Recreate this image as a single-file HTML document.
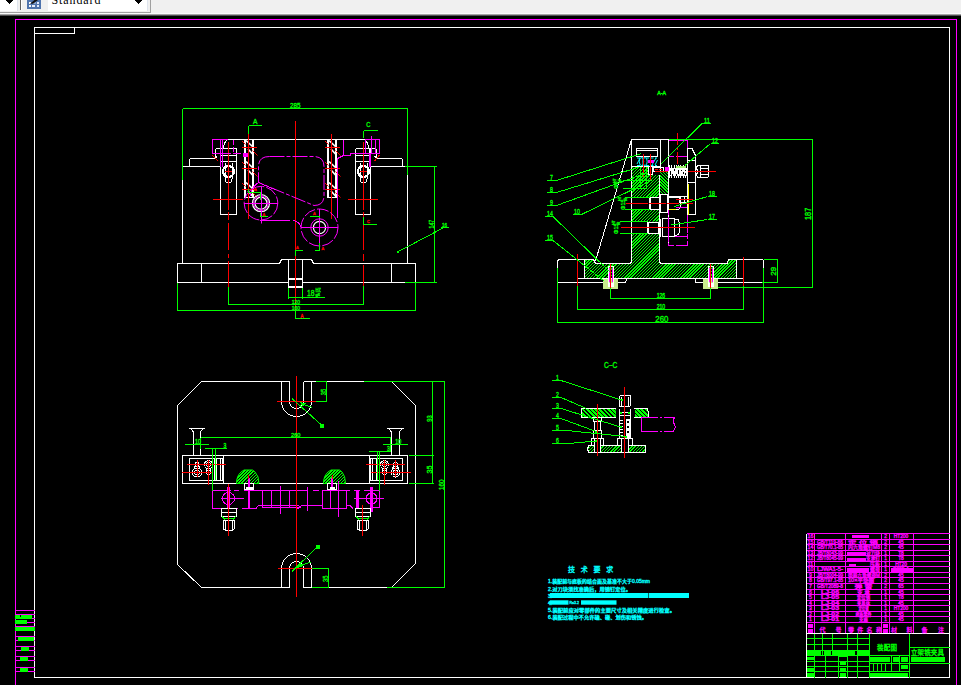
<!DOCTYPE html>
<html><head><meta charset="utf-8"><title>CAD</title>
<style>
html,body{margin:0;padding:0;background:#000;overflow:hidden}
body{width:961px;height:685px;position:relative;font-family:"Liberation Sans","Noto Sans CJK SC",sans-serif}
#tb{position:absolute;left:0;top:0;width:961px;height:16px;background:#f0f0f0;overflow:hidden}
svg{position:absolute;left:0;top:0}
svg text{stroke-width:0.35px;paint-order:stroke}
</style></head><body>
<svg width="961" height="685" viewBox="0 0 961 685" shape-rendering="crispEdges">
<rect x="0" y="0" width="961" height="685" fill="#000000"/>
<rect x="0" y="0" width="961" height="13" fill="#f0f0f0"/>
<rect x="0" y="13" width="961" height="1" fill="#fafafa"/>
<rect x="0" y="14" width="961" height="1" fill="#a4a4a4"/>
<rect x="0" y="15" width="961" height="1" fill="#505050"/>
<rect x="0" y="11.5" width="151" height="1.0" fill="#a0a0a0"/>
<rect x="150" y="0" width="1" height="12.5" fill="#a0a0a0"/>
<rect x="48" y="0" width="98.5" height="10.5" fill="#ffffff"/>
<rect x="146.5" y="0" width="1.0" height="11" fill="#dfe5ee"/>
<rect x="48" y="10.5" width="99.5" height="0.5" fill="#e4e8ee"/>
<rect x="0" y="0" width="16.5" height="10.5" fill="#ffffff"/>
<rect x="16.5" y="0" width="1.0" height="11" fill="#dfe5ee"/>
<rect x="0" y="10.5" width="17.5" height="0.5" fill="#e4e8ee"/>
<rect x="20" y="0" width="1" height="9.5" fill="#606060"/>
<rect x="21" y="0" width="1" height="9.5" fill="#ffffff"/>
<polygon points="5.8,0 13.2,0 9.5,4.1" fill="#000"/>
<polygon points="134.5,0 142.5,0 138.5,4.2" fill="#000"/>
<rect x="27" y="0" width="14" height="8.5" fill="#4f74ad"/>
<rect x="28.5" y="1.5" width="2.5" height="2.3" fill="#f4f7fc"/>
<rect x="32" y="1.5" width="3.5" height="2.3" fill="#8aa5d0"/>
<rect x="36.5" y="1.5" width="2.5" height="2.3" fill="#dfe8fa"/>
<rect x="28.5" y="5" width="2.5" height="1.9000000000000004" fill="#f4f7fc"/>
<rect x="32.2" y="5" width="2.5999999999999943" height="1.9000000000000004" fill="#e8eefa"/>
<rect x="36.5" y="5" width="2.5" height="1.9000000000000004" fill="#dfe8fa"/>
<polygon points="30,3.8 33,3.8 38,0 34.5,0" fill="#111" shape-rendering="auto"/>
<clipPath id="tbc"><rect x="48" y="0" width="99" height="10"/></clipPath>
<g clip-path="url(#tbc)" shape-rendering="auto">
<text x="51.5" y="3.6" fill="#000" font-size="12" font-family='"Liberation Serif", serif' letter-spacing="0.9" style="stroke:none">Standard</text>
</g>
<line x1="15" y1="19.5" x2="957" y2="19.5" stroke="#ff00ff" stroke-width="1"/>
<line x1="15.5" y1="19" x2="15.5" y2="685" stroke="#ff00ff" stroke-width="1"/>
<line x1="956.5" y1="19" x2="956.5" y2="685" stroke="#ff00ff" stroke-width="1"/>
<rect x="34.5" y="27.5" width="915.0" height="650.0" stroke="#ffffff" fill="none" stroke-width="1"/>
<rect x="34.5" y="27.5" width="40.0" height="6.0" stroke="#ffffff" fill="none" stroke-width="1"/>
<line x1="15" y1="610.5" x2="34.5" y2="610.5" stroke="#ff00ff" stroke-width="1"/>
<line x1="15" y1="614.5" x2="34.5" y2="614.5" stroke="#ff00ff" stroke-width="1"/>
<line x1="15" y1="618.5" x2="34.5" y2="618.5" stroke="#ff00ff" stroke-width="1"/>
<line x1="15" y1="622.5" x2="34.5" y2="622.5" stroke="#ff00ff" stroke-width="1"/>
<line x1="15" y1="626.5" x2="34.5" y2="626.5" stroke="#ff00ff" stroke-width="1"/>
<line x1="15" y1="630.5" x2="34.5" y2="630.5" stroke="#ff00ff" stroke-width="1"/>
<line x1="15" y1="636.5" x2="34.5" y2="636.5" stroke="#ff00ff" stroke-width="1"/>
<line x1="15" y1="640.5" x2="34.5" y2="640.5" stroke="#ff00ff" stroke-width="1"/>
<line x1="15" y1="646.5" x2="34.5" y2="646.5" stroke="#ff00ff" stroke-width="1"/>
<line x1="15" y1="650.5" x2="34.5" y2="650.5" stroke="#ff00ff" stroke-width="1"/>
<line x1="15" y1="656.5" x2="34.5" y2="656.5" stroke="#ff00ff" stroke-width="1"/>
<line x1="15" y1="660.5" x2="34.5" y2="660.5" stroke="#ff00ff" stroke-width="1"/>
<line x1="15" y1="667.5" x2="34.5" y2="667.5" stroke="#ff00ff" stroke-width="1"/>
<line x1="15" y1="671.5" x2="34.5" y2="671.5" stroke="#ff00ff" stroke-width="1"/>
<rect x="15" y="615" width="17" height="3.5" fill="#00ff00"/>
<rect x="19.5" y="615" width="1.0" height="2" fill="#000"/>
<rect x="15" y="620" width="12" height="4" fill="#00ff00"/>
<rect x="15" y="627" width="20" height="4" fill="#00ff00"/>
<rect x="18" y="637" width="16" height="4" fill="#00ff00"/>
<rect x="21" y="647" width="8" height="4" fill="#00ff00"/>
<rect x="20" y="657" width="8" height="4" fill="#00ff00"/>
<rect x="20" y="668" width="8" height="4" fill="#00ff00"/>
<g id="v1">
<rect x="177.5" y="263.5" width="238.0" height="19.0" stroke="#ffffff" fill="none" stroke-width="1"/>
<line x1="201.5" y1="263.5" x2="201.5" y2="282.5" stroke="#ffffff" stroke-width="1"/>
<line x1="391.5" y1="263.5" x2="391.5" y2="282.5" stroke="#ffffff" stroke-width="1"/>
<rect x="280" y="263" width="33" height="1" fill="#000"/>
<path d="M279.5,263.5 L281.5,259.5 H311.5 L313.5,263.5" stroke="#ffffff" fill="none" stroke-width="1"/>
<line x1="288.5" y1="259.5" x2="288.5" y2="287.5" stroke="#ffffff" stroke-width="1"/>
<line x1="302.5" y1="259.5" x2="302.5" y2="287.5" stroke="#ffffff" stroke-width="1"/>
<rect x="289" y="282" width="13" height="1" fill="#000"/>
<rect x="288.5" y="278" width="14.0" height="1.5" fill="#ffffff"/>
<rect x="288.5" y="285.8" width="14.0" height="2.0" fill="#ffffff"/>
<line x1="182.5" y1="166.5" x2="182.5" y2="263.5" stroke="#ffffff" stroke-width="1"/>
<line x1="407.5" y1="166.5" x2="407.5" y2="263.5" stroke="#ffffff" stroke-width="1"/>
<line x1="182.5" y1="166.5" x2="220.5" y2="166.5" stroke="#ffffff" stroke-width="1"/>
<line x1="370.5" y1="166.5" x2="407.5" y2="166.5" stroke="#ffffff" stroke-width="1"/>
<path d="M189.5,166.5 V160.5 Q189.5,158.5 191.5,158.5 H213.5 L217.5,156.5" stroke="#ffffff" fill="none" stroke-width="1"/>
<path d="M402.5,166.5 V160.5 Q402.5,158.5 400.5,158.5 H378.5 L374.5,156.5" stroke="#ffffff" fill="none" stroke-width="1"/>
<line x1="228" y1="139.5" x2="364" y2="139.5" stroke="#ffffff" stroke-width="1"/>
<path d="M228,139.5 Q223.5,141 222.5,153" stroke="#ffffff" fill="none" stroke-width="1"/>
<path d="M364,139.5 Q368.5,141 369.5,153" stroke="#ffffff" fill="none" stroke-width="1"/>
<line x1="220.5" y1="148.5" x2="220.5" y2="214.5" stroke="#ffffff" stroke-width="1"/>
<line x1="236.5" y1="148.5" x2="236.5" y2="214.5" stroke="#ffffff" stroke-width="1"/>
<line x1="220.5" y1="214.5" x2="236.5" y2="214.5" stroke="#ffffff" stroke-width="1"/>
<line x1="220.5" y1="155.5" x2="236.5" y2="155.5" stroke="#ffffff" stroke-width="1"/>
<line x1="220.5" y1="161.5" x2="236.5" y2="161.5" stroke="#ffffff" stroke-width="1"/>
<path d="M236.5,148.5 H217.5 Q215.5,148.5 215.5,150.5 V156.5" stroke="#ffffff" fill="none" stroke-width="1"/>
<circle cx="228.5" cy="171.5" r="5.5" stroke="#ffffff" fill="none" stroke-width="2"/>
<path d="M225.0,162.5 V179 Q225.0,183 228.5,183 Q232.0,183 232.0,179 V162.5" stroke="#ffffff" fill="none" stroke-width="1"/>
<line x1="225.0" y1="171.5" x2="232.0" y2="171.5" stroke="#ff0000" stroke-width="1"/>
<line x1="228.5" y1="142" x2="228.5" y2="209.5" stroke="#ff0000" stroke-width="1"/>
<line x1="228.5" y1="211.5" x2="228.5" y2="217" stroke="#ff0000" stroke-width="1"/>
<line x1="212.5" y1="199.5" x2="242.5" y2="199.5" stroke="#ff0000" stroke-width="1"/>
<line x1="355.5" y1="148.5" x2="355.5" y2="214.5" stroke="#ffffff" stroke-width="1"/>
<line x1="370.5" y1="148.5" x2="370.5" y2="214.5" stroke="#ffffff" stroke-width="1"/>
<line x1="355.5" y1="214.5" x2="370.5" y2="214.5" stroke="#ffffff" stroke-width="1"/>
<line x1="355.5" y1="155.5" x2="370.5" y2="155.5" stroke="#ffffff" stroke-width="1"/>
<line x1="355.5" y1="161.5" x2="370.5" y2="161.5" stroke="#ffffff" stroke-width="1"/>
<path d="M355.5,148.5 H374.5 Q376.5,148.5 376.5,150.5 V156.5" stroke="#ffffff" fill="none" stroke-width="1"/>
<circle cx="363.5" cy="171.5" r="5.5" stroke="#ffffff" fill="none" stroke-width="2"/>
<path d="M360.0,162.5 V179 Q360.0,183 363.5,183 Q367.0,183 367.0,179 V162.5" stroke="#ffffff" fill="none" stroke-width="1"/>
<line x1="360.0" y1="171.5" x2="367.0" y2="171.5" stroke="#ff0000" stroke-width="1"/>
<line x1="363.5" y1="142" x2="363.5" y2="209.5" stroke="#ff0000" stroke-width="1"/>
<line x1="363.5" y1="211.5" x2="363.5" y2="217" stroke="#ff0000" stroke-width="1"/>
<line x1="347.5" y1="199.5" x2="377.5" y2="199.5" stroke="#ff0000" stroke-width="1"/>
<line x1="228.5" y1="217" x2="228.5" y2="219.5" stroke="#ff0000" stroke-width="1"/>
<line x1="228.5" y1="223" x2="228.5" y2="250" stroke="#ff0000" stroke-width="1"/>
<line x1="228.5" y1="253.5" x2="228.5" y2="258" stroke="#ff0000" stroke-width="1"/>
<line x1="228.5" y1="260.5" x2="228.5" y2="287" stroke="#ff0000" stroke-width="1"/>
<line x1="363.5" y1="224" x2="363.5" y2="249.5" stroke="#ff0000" stroke-width="1"/>
<line x1="363.5" y1="253.5" x2="363.5" y2="260.5" stroke="#ff0000" stroke-width="1"/>
<line x1="363.5" y1="265" x2="363.5" y2="285.5" stroke="#ff0000" stroke-width="1"/>
<line x1="212" y1="155" x2="218.5" y2="161.5" stroke="#ff0000" stroke-width="1"/>
<line x1="379.5" y1="155" x2="374.5" y2="161" stroke="#ff0000" stroke-width="1"/>
<rect x="244.5" y="139.5" width="9.0" height="58.0" stroke="#ffffff" fill="none" stroke-width="1"/>
<line x1="245.5" y1="139.5" x2="245.5" y2="197.5" stroke="#ffffff" stroke-width="1"/>
<line x1="252.0" y1="139.5" x2="252.0" y2="197.5" stroke="#ffffff" stroke-width="1"/>
<line x1="242.0" y1="147.5" x2="257.0" y2="147.5" stroke="#ff0000" stroke-width="1"/>
<g shape-rendering="auto">
<line x1="242.0" y1="141.0" x2="245.5" y2="144.5" stroke="#ff0000" stroke-width="1"/>
<line x1="252.5" y1="150.5" x2="257.5" y2="155.5" stroke="#ff0000" stroke-width="1"/>
<line x1="246.0" y1="140.5" x2="252.5" y2="146.5" stroke="#ffffff" stroke-width="1.7"/>
<line x1="248.0" y1="149.0" x2="252.5" y2="154.0" stroke="#ffffff" stroke-width="1.7"/>
</g>
<line x1="242.0" y1="168.5" x2="257.0" y2="168.5" stroke="#ff0000" stroke-width="1"/>
<g shape-rendering="auto">
<line x1="242.0" y1="162.0" x2="245.5" y2="165.5" stroke="#ff0000" stroke-width="1"/>
<line x1="252.5" y1="171.5" x2="257.5" y2="176.5" stroke="#ff0000" stroke-width="1"/>
<line x1="246.0" y1="161.5" x2="252.5" y2="167.5" stroke="#ffffff" stroke-width="1.7"/>
<line x1="248.0" y1="170.0" x2="252.5" y2="175.0" stroke="#ffffff" stroke-width="1.7"/>
</g>
<line x1="242.0" y1="189.5" x2="257.0" y2="189.5" stroke="#ff0000" stroke-width="1"/>
<g shape-rendering="auto">
<line x1="242.0" y1="183.0" x2="245.5" y2="186.5" stroke="#ff0000" stroke-width="1"/>
<line x1="252.5" y1="192.5" x2="257.5" y2="197.5" stroke="#ff0000" stroke-width="1"/>
<line x1="246.0" y1="182.5" x2="252.5" y2="188.5" stroke="#ffffff" stroke-width="1.7"/>
<line x1="248.0" y1="191.0" x2="252.5" y2="196.0" stroke="#ffffff" stroke-width="1.7"/>
</g>
<rect x="327.5" y="139.5" width="9.0" height="58.0" stroke="#ffffff" fill="none" stroke-width="1"/>
<line x1="328.5" y1="139.5" x2="328.5" y2="197.5" stroke="#ffffff" stroke-width="1"/>
<line x1="335.0" y1="139.5" x2="335.0" y2="197.5" stroke="#ffffff" stroke-width="1"/>
<line x1="325.0" y1="147.5" x2="340.0" y2="147.5" stroke="#ff0000" stroke-width="1"/>
<g shape-rendering="auto">
<line x1="325.0" y1="141.0" x2="328.5" y2="144.5" stroke="#ff0000" stroke-width="1"/>
<line x1="335.5" y1="150.5" x2="340.5" y2="155.5" stroke="#ff0000" stroke-width="1"/>
<line x1="329.0" y1="140.5" x2="335.5" y2="146.5" stroke="#ffffff" stroke-width="1.7"/>
<line x1="331.0" y1="149.0" x2="335.5" y2="154.0" stroke="#ffffff" stroke-width="1.7"/>
</g>
<line x1="325.0" y1="168.5" x2="340.0" y2="168.5" stroke="#ff0000" stroke-width="1"/>
<g shape-rendering="auto">
<line x1="325.0" y1="162.0" x2="328.5" y2="165.5" stroke="#ff0000" stroke-width="1"/>
<line x1="335.5" y1="171.5" x2="340.5" y2="176.5" stroke="#ff0000" stroke-width="1"/>
<line x1="329.0" y1="161.5" x2="335.5" y2="167.5" stroke="#ffffff" stroke-width="1.7"/>
<line x1="331.0" y1="170.0" x2="335.5" y2="175.0" stroke="#ffffff" stroke-width="1.7"/>
</g>
<line x1="325.0" y1="189.5" x2="340.0" y2="189.5" stroke="#ff0000" stroke-width="1"/>
<g shape-rendering="auto">
<line x1="325.0" y1="183.0" x2="328.5" y2="186.5" stroke="#ff0000" stroke-width="1"/>
<line x1="335.5" y1="192.5" x2="340.5" y2="197.5" stroke="#ff0000" stroke-width="1"/>
<line x1="329.0" y1="182.5" x2="335.5" y2="188.5" stroke="#ffffff" stroke-width="1.7"/>
<line x1="331.0" y1="191.0" x2="335.5" y2="196.0" stroke="#ffffff" stroke-width="1.7"/>
</g>
<line x1="248.5" y1="134" x2="248.5" y2="219" stroke="#ff0000" stroke-width="1"/>
<line x1="331.5" y1="134" x2="331.5" y2="219" stroke="#ff0000" stroke-width="1"/>
<line x1="295.5" y1="121" x2="295.5" y2="310" stroke="#ff0000" stroke-width="1"/>
<path d="M269.5,156.5 H313.5 Q324,156.5 324,166.5 V195.5 Q324,205.5 314,205.5 L258.5,182.5 V166.5 Q258.5,156.5 269.5,156.5 Z" stroke="#ff00ff" fill="none" stroke-dasharray="15 2 4 2" shape-rendering="auto"/>
<rect x="212.5" y="139.5" width="10.0" height="14.0" stroke="#ff00ff" fill="none" stroke-width="1"/>
<line x1="212.5" y1="139.5" x2="228" y2="139.5" stroke="#ff00ff" stroke-width="1"/>
<line x1="222.5" y1="153.5" x2="243" y2="153.5" stroke="#ff00ff" stroke-width="1" stroke-dasharray="8 2"/>
<rect x="243" y="153" width="5" height="4" fill="#ff00ff"/>
<line x1="220.5" y1="139.5" x2="220.5" y2="166.5" stroke="#ff00ff" stroke-width="1"/>
<line x1="222.5" y1="139.5" x2="222.5" y2="166.5" stroke="#ff00ff" stroke-width="1"/>
<line x1="233.5" y1="140" x2="233.5" y2="153.5" stroke="#ff00ff" stroke-width="1" stroke-dasharray="5 2"/>
<rect x="365.5" y="139.5" width="14.0" height="14.0" stroke="#ff00ff" fill="none" stroke-width="1"/>
<line x1="371.5" y1="136" x2="371.5" y2="153.5" stroke="#ff00ff" stroke-width="1"/>
<line x1="375.5" y1="139.5" x2="375.5" y2="153.5" stroke="#ff00ff" stroke-width="1"/>
<line x1="369.5" y1="153" x2="369.5" y2="167" stroke="#ff00ff" stroke-width="2"/>
<line x1="343.5" y1="140" x2="343.5" y2="156" stroke="#ff00ff" stroke-width="1"/>
<path d="M379.5,153.5 H351 L350.5,155.5 H343.5 L337.5,158.5 V218" stroke="#ff00ff" fill="none" stroke-width="1"/>
<g shape-rendering="auto">
<circle cx="261" cy="203.2" r="8.5" stroke="#ffffff" fill="none" stroke-width="1.2"/>
<circle cx="261" cy="203.2" r="6" stroke="#ffffff" fill="none" stroke-width="1.2"/>
<circle cx="261" cy="203.2" r="7.3" stroke="#ff00ff" fill="none" stroke-width="1"/>
<circle cx="261" cy="203.2" r="16.8" stroke="#ff00ff" fill="none" stroke-width="1" stroke-dasharray="12 2"/>
<line x1="244" y1="203.5" x2="278" y2="203.5" stroke="#ff00ff" stroke-width="1"/>
<line x1="261.5" y1="186.5" x2="261.5" y2="223.5" stroke="#ff00ff" stroke-width="1"/>
<circle cx="319.5" cy="227.5" r="6.1" stroke="#ffffff" fill="none" stroke-width="1.2"/>
<circle cx="319.5" cy="227.5" r="8.7" stroke="#ff00ff" fill="none" stroke-width="1"/>
<circle cx="319.5" cy="227.5" r="18.5" stroke="#ff00ff" fill="none" stroke-width="1" stroke-dasharray="12 2"/>
</g>
<line x1="300.5" y1="227.5" x2="338" y2="227.5" stroke="#ff00ff" stroke-width="1"/>
<line x1="319.5" y1="209" x2="319.5" y2="243.5" stroke="#ff00ff" stroke-width="1"/>
<path d="M258.5,182.5 Q252,186 249.5,197.5" stroke="#ff00ff" fill="none" stroke-width="1"/>
<path d="M260,220.5 H293 Q299,221 301,227" stroke="#ff00ff" fill="none" stroke-width="1" stroke-dasharray="30 3"/>
<line x1="258.5" y1="182.5" x2="276" y2="190" stroke="#ff00ff" stroke-width="1"/>
<line x1="248.5" y1="125.5" x2="248.5" y2="134" stroke="#00ff00" stroke-width="1"/>
<line x1="248.5" y1="125.5" x2="262" y2="125.5" stroke="#00ff00" stroke-width="1"/>
<line x1="363.5" y1="130.5" x2="363.5" y2="138" stroke="#00ff00" stroke-width="1"/>
<line x1="363.5" y1="130.5" x2="377.5" y2="130.5" stroke="#00ff00" stroke-width="1"/>
<path d="M248.5,189 V192.5 H260.5 V199.5" stroke="#00ff00" fill="none" stroke-width="1"/>
<path d="M260.5,213 V216.5 H268" stroke="#00ff00" fill="none" stroke-width="1"/>
<path d="M310,216.5 H319.5 V218" stroke="#00ff00" fill="none" stroke-width="1"/>
<path d="M319.5,243 V250.5 H315" stroke="#00ff00" fill="none" stroke-width="1"/>
<path d="M295.5,255.5 V250.5 H303" stroke="#00ff00" fill="none" stroke-width="1"/>
<path d="M295.5,310 V318.5 H310" stroke="#00ff00" fill="none" stroke-width="1"/>
<path d="M363.5,217 V224.5 H376.5" stroke="#00ff00" fill="none" stroke-width="1"/>
<line x1="182.5" y1="108.5" x2="407.5" y2="108.5" stroke="#00ff00" stroke-width="1"/>
<line x1="182.5" y1="108.5" x2="182.5" y2="180" stroke="#00ff00" stroke-width="1"/>
<line x1="407.5" y1="108.5" x2="407.5" y2="175" stroke="#00ff00" stroke-width="1"/>
<line x1="405" y1="166.5" x2="437" y2="166.5" stroke="#00ff00" stroke-width="1"/>
<line x1="405" y1="282.5" x2="437" y2="282.5" stroke="#00ff00" stroke-width="1"/>
<line x1="434.5" y1="166.5" x2="434.5" y2="282.5" stroke="#00ff00" stroke-width="1"/>
<line x1="288.5" y1="287.5" x2="288.5" y2="298.5" stroke="#00ff00" stroke-width="1"/>
<line x1="302.5" y1="287.5" x2="302.5" y2="298.5" stroke="#00ff00" stroke-width="1"/>
<line x1="288.5" y1="297.5" x2="325" y2="297.5" stroke="#00ff00" stroke-width="1"/>
<line x1="228.5" y1="287" x2="228.5" y2="304.5" stroke="#00ff00" stroke-width="1"/>
<line x1="363.5" y1="286" x2="363.5" y2="304.5" stroke="#00ff00" stroke-width="1"/>
<line x1="228.5" y1="304.5" x2="363.5" y2="304.5" stroke="#00ff00" stroke-width="1"/>
<line x1="177.5" y1="282.5" x2="177.5" y2="310.5" stroke="#00ff00" stroke-width="1"/>
<line x1="415.5" y1="282.5" x2="415.5" y2="310.5" stroke="#00ff00" stroke-width="1"/>
<line x1="177.5" y1="310.5" x2="415.5" y2="310.5" stroke="#00ff00" stroke-width="1"/>
<line x1="397.5" y1="252" x2="445" y2="227" stroke="#00ff00" stroke-width="1"/>
<line x1="441" y1="227.5" x2="449" y2="227.5" stroke="#00ff00" stroke-width="1"/>
<rect x="396.5" y="251" width="2.0" height="2" fill="#00ff00"/>
<g shape-rendering="auto">
<text x="290" y="107.8" fill="#00ff00" stroke="#00ff00" font-size="7" text-anchor="start" font-family='"Liberation Sans", "Noto Sans CJK SC", sans-serif' textLength="10.5" lengthAdjust="spacingAndGlyphs">285</text>
<text x="253" y="124.2" fill="#00ff00" stroke="#00ff00" font-size="7" text-anchor="start" font-family='"Liberation Sans", "Noto Sans CJK SC", sans-serif' textLength="4.4" lengthAdjust="spacingAndGlyphs">A</text>
<text x="366.3" y="127.2" fill="#00ff00" stroke="#00ff00" font-size="7" text-anchor="start" font-family='"Liberation Sans", "Noto Sans CJK SC", sans-serif' textLength="4.2" lengthAdjust="spacingAndGlyphs">C</text>
<text x="307" y="296" fill="#00ff00" stroke="#00ff00" font-size="9" text-anchor="start" font-family='"Liberation Sans", "Noto Sans CJK SC", sans-serif' textLength="7.5" lengthAdjust="spacingAndGlyphs">18</text>
<text x="315.5" y="291" fill="#00ff00" stroke="#00ff00" font-size="4.2" text-anchor="start" font-family='"Liberation Sans", "Noto Sans CJK SC", sans-serif'>H7</text>
<text x="315.5" y="296" fill="#00ff00" stroke="#00ff00" font-size="4.2" text-anchor="start" font-family='"Liberation Sans", "Noto Sans CJK SC", sans-serif'>g6</text>
<line x1="315.5" y1="291.8" x2="321" y2="291.8" stroke="#00ff00" stroke-width="1"/>
<text x="291.8" y="304.2" fill="#00ff00" stroke="#00ff00" font-size="6" text-anchor="start" font-family='"Liberation Sans", "Noto Sans CJK SC", sans-serif' textLength="8.2" lengthAdjust="spacingAndGlyphs">120</text>
<text x="291.8" y="310.2" fill="#00ff00" stroke="#00ff00" font-size="6" text-anchor="start" font-family='"Liberation Sans", "Noto Sans CJK SC", sans-serif' textLength="8.2" lengthAdjust="spacingAndGlyphs">160</text>
<text x="434" y="228.5" fill="#00ff00" stroke="#00ff00" font-size="7" text-anchor="start" font-family='"Liberation Sans", "Noto Sans CJK SC", sans-serif' transform="rotate(-90 434 228.5)" textLength="8.8" lengthAdjust="spacingAndGlyphs">147</text>
<text x="442" y="227" fill="#00ff00" stroke="#00ff00" font-size="5.5" text-anchor="start" font-family='"Liberation Sans", "Noto Sans CJK SC", sans-serif' textLength="5" lengthAdjust="spacingAndGlyphs">16</text>
<text x="296" y="249" fill="#ff0000" stroke="#ff0000" font-size="4" text-anchor="start" font-family='"Liberation Sans", "Noto Sans CJK SC", sans-serif'>A</text>
<text x="321.5" y="250" fill="#ff0000" stroke="#ff0000" font-size="4" text-anchor="start" font-family='"Liberation Sans", "Noto Sans CJK SC", sans-serif'>A</text>
<text x="313" y="215" fill="#ff0000" stroke="#ff0000" font-size="4" text-anchor="start" font-family='"Liberation Sans", "Noto Sans CJK SC", sans-serif'>A</text>
<text x="262.5" y="215.5" fill="#ff0000" stroke="#ff0000" font-size="4" text-anchor="start" font-family='"Liberation Sans", "Noto Sans CJK SC", sans-serif'>A</text>
<text x="254" y="191" fill="#ff0000" stroke="#ff0000" font-size="4" text-anchor="start" font-family='"Liberation Sans", "Noto Sans CJK SC", sans-serif'>A</text>
<text x="367" y="223" fill="#ff0000" stroke="#ff0000" font-size="4" text-anchor="start" font-family='"Liberation Sans", "Noto Sans CJK SC", sans-serif'>C</text>
<text x="300.5" y="317.5" fill="#ff0000" stroke="#ff0000" font-size="4.5" text-anchor="start" font-family='"Liberation Sans", "Noto Sans CJK SC", sans-serif'>A</text>
</g>
</g>
<defs>
<pattern id="hg" width="2.2" height="2.2" patternUnits="userSpaceOnUse" patternTransform="rotate(45)"><line x1="0" y1="0" x2="0" y2="2.2" stroke="#00ff00" stroke-width="0.9"/></pattern>
<pattern id="hg2" width="2.2" height="2.2" patternUnits="userSpaceOnUse" patternTransform="rotate(-45)"><line x1="0" y1="0" x2="0" y2="2.2" stroke="#00ff00" stroke-width="0.9"/></pattern>
<pattern id="hc" width="2" height="2" patternUnits="userSpaceOnUse" patternTransform="rotate(45)"><line x1="0" y1="0" x2="0" y2="2" stroke="#00ffff" stroke-width="1"/></pattern>
<pattern id="hgd" width="2.2" height="2.2" patternUnits="userSpaceOnUse" patternTransform="rotate(45)"><line x1="0" y1="0" x2="0" y2="2.2" stroke="#00ff00" stroke-width="0.9"/></pattern>
</defs>
<g id="v2">
<clipPath id="hf1"><path d="M631.5,166.5 H660 V197 H650 V209.5 H660 V221.5 H650 V233.5 H660 V263.5 H736 V259.5 H728.5 L727,263.5 H736 V278.5 H584.5 V259.5 H593 L595,263.5 H631.5 Z"/></clipPath>
<g clip-path="url(#hf1)" stroke="#00ff00" stroke-width="1" shape-rendering="crispEdges">
<line x1="471.00" y1="279" x2="584.00" y2="166"/>
<line x1="474.11" y1="279" x2="587.11" y2="166"/>
<line x1="477.22" y1="279" x2="590.22" y2="166"/>
<line x1="480.33" y1="279" x2="593.33" y2="166"/>
<line x1="483.44" y1="279" x2="596.44" y2="166"/>
<line x1="486.55" y1="279" x2="599.55" y2="166"/>
<line x1="489.66" y1="279" x2="602.66" y2="166"/>
<line x1="492.77" y1="279" x2="605.77" y2="166"/>
<line x1="495.88" y1="279" x2="608.88" y2="166"/>
<line x1="498.99" y1="279" x2="611.99" y2="166"/>
<line x1="502.10" y1="279" x2="615.10" y2="166"/>
<line x1="505.21" y1="279" x2="618.21" y2="166"/>
<line x1="508.32" y1="279" x2="621.32" y2="166"/>
<line x1="511.43" y1="279" x2="624.43" y2="166"/>
<line x1="514.54" y1="279" x2="627.54" y2="166"/>
<line x1="517.65" y1="279" x2="630.65" y2="166"/>
<line x1="520.76" y1="279" x2="633.76" y2="166"/>
<line x1="523.87" y1="279" x2="636.87" y2="166"/>
<line x1="526.98" y1="279" x2="639.98" y2="166"/>
<line x1="530.09" y1="279" x2="643.09" y2="166"/>
<line x1="533.20" y1="279" x2="646.20" y2="166"/>
<line x1="536.31" y1="279" x2="649.31" y2="166"/>
<line x1="539.42" y1="279" x2="652.42" y2="166"/>
<line x1="542.53" y1="279" x2="655.53" y2="166"/>
<line x1="545.64" y1="279" x2="658.64" y2="166"/>
<line x1="548.75" y1="279" x2="661.75" y2="166"/>
<line x1="551.86" y1="279" x2="664.86" y2="166"/>
<line x1="554.97" y1="279" x2="667.97" y2="166"/>
<line x1="558.08" y1="279" x2="671.08" y2="166"/>
<line x1="561.19" y1="279" x2="674.19" y2="166"/>
<line x1="564.30" y1="279" x2="677.30" y2="166"/>
<line x1="567.41" y1="279" x2="680.41" y2="166"/>
<line x1="570.52" y1="279" x2="683.52" y2="166"/>
<line x1="573.63" y1="279" x2="686.63" y2="166"/>
<line x1="576.74" y1="279" x2="689.74" y2="166"/>
<line x1="579.85" y1="279" x2="692.85" y2="166"/>
<line x1="582.96" y1="279" x2="695.96" y2="166"/>
<line x1="586.07" y1="279" x2="699.07" y2="166"/>
<line x1="589.18" y1="279" x2="702.18" y2="166"/>
<line x1="592.29" y1="279" x2="705.29" y2="166"/>
<line x1="595.40" y1="279" x2="708.40" y2="166"/>
<line x1="598.51" y1="279" x2="711.51" y2="166"/>
<line x1="601.62" y1="279" x2="714.62" y2="166"/>
<line x1="604.73" y1="279" x2="717.73" y2="166"/>
<line x1="607.84" y1="279" x2="720.84" y2="166"/>
<line x1="610.95" y1="279" x2="723.95" y2="166"/>
<line x1="614.06" y1="279" x2="727.06" y2="166"/>
<line x1="617.17" y1="279" x2="730.17" y2="166"/>
<line x1="620.28" y1="279" x2="733.28" y2="166"/>
<line x1="623.39" y1="279" x2="736.39" y2="166"/>
<line x1="626.50" y1="279" x2="739.50" y2="166"/>
<line x1="629.61" y1="279" x2="742.61" y2="166"/>
<line x1="632.72" y1="279" x2="745.72" y2="166"/>
<line x1="635.83" y1="279" x2="748.83" y2="166"/>
<line x1="638.94" y1="279" x2="751.94" y2="166"/>
<line x1="642.05" y1="279" x2="755.05" y2="166"/>
<line x1="645.16" y1="279" x2="758.16" y2="166"/>
<line x1="648.27" y1="279" x2="761.27" y2="166"/>
<line x1="651.38" y1="279" x2="764.38" y2="166"/>
<line x1="654.49" y1="279" x2="767.49" y2="166"/>
<line x1="657.60" y1="279" x2="770.60" y2="166"/>
<line x1="660.71" y1="279" x2="773.71" y2="166"/>
<line x1="663.82" y1="279" x2="776.82" y2="166"/>
<line x1="666.93" y1="279" x2="779.93" y2="166"/>
<line x1="670.04" y1="279" x2="783.04" y2="166"/>
<line x1="673.15" y1="279" x2="786.15" y2="166"/>
<line x1="676.26" y1="279" x2="789.26" y2="166"/>
<line x1="679.37" y1="279" x2="792.37" y2="166"/>
<line x1="682.48" y1="279" x2="795.48" y2="166"/>
<line x1="685.59" y1="279" x2="798.59" y2="166"/>
<line x1="688.70" y1="279" x2="801.70" y2="166"/>
<line x1="691.81" y1="279" x2="804.81" y2="166"/>
<line x1="694.92" y1="279" x2="807.92" y2="166"/>
<line x1="698.03" y1="279" x2="811.03" y2="166"/>
<line x1="701.14" y1="279" x2="814.14" y2="166"/>
<line x1="704.25" y1="279" x2="817.25" y2="166"/>
<line x1="707.36" y1="279" x2="820.36" y2="166"/>
<line x1="710.47" y1="279" x2="823.47" y2="166"/>
<line x1="713.58" y1="279" x2="826.58" y2="166"/>
<line x1="716.69" y1="279" x2="829.69" y2="166"/>
<line x1="719.80" y1="279" x2="832.80" y2="166"/>
<line x1="722.91" y1="279" x2="835.91" y2="166"/>
<line x1="726.02" y1="279" x2="839.02" y2="166"/>
<line x1="729.13" y1="279" x2="842.13" y2="166"/>
<line x1="732.24" y1="279" x2="845.24" y2="166"/>
<line x1="735.35" y1="279" x2="848.35" y2="166"/>
</g>
<clipPath id="hf2"><path d="M660,172 H668.5 V194 H660 Z"/></clipPath>
<g clip-path="url(#hf2)" stroke="#00ff00" stroke-width="1" shape-rendering="crispEdges">
<line x1="638.00" y1="172" x2="660.00" y2="194"/>
<line x1="641.11" y1="172" x2="663.11" y2="194"/>
<line x1="644.22" y1="172" x2="666.22" y2="194"/>
<line x1="647.33" y1="172" x2="669.33" y2="194"/>
<line x1="650.44" y1="172" x2="672.44" y2="194"/>
<line x1="653.55" y1="172" x2="675.55" y2="194"/>
<line x1="656.66" y1="172" x2="678.66" y2="194"/>
<line x1="659.77" y1="172" x2="681.77" y2="194"/>
<line x1="662.88" y1="172" x2="684.88" y2="194"/>
<line x1="665.99" y1="172" x2="687.99" y2="194"/>
</g>
<path d="M557.5,282.5 V262 Q557.5,259.5 560,259.5 H593.5 L595.5,263.5 H628.5 Q631.5,263.5 631.5,260.5" stroke="#ffffff" fill="none" stroke-width="1"/>
<path d="M659.5,260.5 Q659.5,263.5 662.5,263.5 H727 L728.5,259.5 H761 Q763.5,259.5 763.5,262 V282.5" stroke="#ffffff" fill="none" stroke-width="1"/>
<line x1="557.5" y1="282.5" x2="625.5" y2="282.5" stroke="#ffffff" stroke-width="1"/>
<line x1="625.5" y1="282.5" x2="627" y2="278.5" stroke="#ffffff" stroke-width="1"/>
<line x1="695.5" y1="282.5" x2="763.5" y2="282.5" stroke="#ffffff" stroke-width="1"/>
<line x1="695.5" y1="278.5" x2="695.5" y2="282.5" stroke="#ffffff" stroke-width="1"/>
<line x1="577.5" y1="278.5" x2="743.5" y2="278.5" stroke="#ffffff" stroke-width="1"/>
<line x1="584.5" y1="259.5" x2="584.5" y2="278.5" stroke="#ffffff" stroke-width="1"/>
<line x1="736.5" y1="259.5" x2="736.5" y2="278.5" stroke="#ffffff" stroke-width="1"/>
<line x1="631.5" y1="139.5" x2="631.5" y2="261" stroke="#ffffff" stroke-width="1"/>
<line x1="659.5" y1="166.5" x2="659.5" y2="261" stroke="#ffffff" stroke-width="1"/>
<line x1="631.5" y1="139.5" x2="595.5" y2="261" stroke="#ffffff" stroke-width="1"/>
<line x1="631.5" y1="139.5" x2="668.5" y2="139.5" stroke="#ffffff" stroke-width="1"/>
<line x1="660.5" y1="139.5" x2="660.5" y2="172" stroke="#ffffff" stroke-width="1"/>
<line x1="668.5" y1="139.5" x2="668.5" y2="245" stroke="#ffffff" stroke-width="1"/>
<rect x="636.5" y="148.5" width="21.0" height="8.0" stroke="#ffffff" fill="none" stroke-width="1"/>
<line x1="636.5" y1="150.5" x2="657.5" y2="150.5" stroke="#ffffff" stroke-width="1"/>
<g shape-rendering="auto">
<path d="M637,158 H657 M637,165.5 H657" stroke="#00ffff" fill="none" stroke-width="1" stroke-dasharray="3 1.5"/>
<ellipse cx="641.5" cy="161.5" rx="2.2" ry="4" stroke="#00ffff" fill="none"/>
<ellipse cx="645" cy="161.5" rx="2.2" ry="4" stroke="#00ffff" fill="none"/>
<path d="M637,164 L640,158 M652,165 L656,158 M655,165 L657.5,160" stroke="#00ffff" fill="none" stroke-width="1"/>
</g>
<rect x="648" y="159.5" width="5.5" height="3.0" fill="#ff00ff"/>
<line x1="631.5" y1="166.5" x2="660" y2="166.5" stroke="#ffffff" stroke-width="1"/>
<rect x="632" y="197.5" width="27.5" height="12.0" fill="#000"/>
<rect x="632" y="222" width="27.5" height="11.5" fill="#000"/>
<rect x="649.5" y="197.5" width="10.0" height="12.0" stroke="#ffffff" fill="none" stroke-width="1"/>
<line x1="650.5" y1="197.5" x2="650.5" y2="209.5" stroke="#ffffff" stroke-width="1"/>
<rect x="647.5" y="222.5" width="12.0" height="11.0" stroke="#ffffff" fill="none" stroke-width="1"/>
<line x1="648.5" y1="222.5" x2="648.5" y2="233.5" stroke="#ffffff" stroke-width="1"/>
<line x1="658.5" y1="222.5" x2="658.5" y2="233.5" stroke="#ffffff" stroke-width="1"/>
<rect x="660.5" y="194.5" width="7.0" height="18.0" stroke="#ffffff" fill="none" stroke-width="1"/>
<path d="M668.5,197.5 H680 V208 L678.5,209.5 H668.5 Z" stroke="#ffffff" fill="none" stroke-width="1"/>
<line x1="669" y1="209.5" x2="676" y2="209.5" stroke="#ffff00" stroke-width="1"/>
<rect x="679.5" y="196.5" width="8.0" height="6.0" stroke="#ffffff" fill="none" stroke-width="1"/>
<line x1="684.5" y1="196.5" x2="684.5" y2="202.5" stroke="#ffffff" stroke-width="1"/>
<rect x="662.5" y="218.5" width="12.0" height="18.0" stroke="#ffffff" fill="none" stroke-width="1"/>
<line x1="660.5" y1="218.5" x2="660.5" y2="236.5" stroke="#ffffff" stroke-width="1"/>
<path d="M674.5,219.5 H677 Q679,219.5 679,221.5 V233 Q679,235 677,235 H674.5" stroke="#ffffff" fill="none" stroke-width="1"/>
<line x1="668.5" y1="140.5" x2="687.5" y2="140.5" stroke="#ff00ff" stroke-width="1"/>
<line x1="687.5" y1="140.5" x2="687.5" y2="148.5" stroke="#ff00ff" stroke-width="1"/>
<line x1="668.5" y1="156.5" x2="674" y2="156.5" stroke="#ff00ff" stroke-width="1"/>
<line x1="675.5" y1="156.5" x2="687.5" y2="156.5" stroke="#ff00ff" stroke-width="1"/>
<line x1="668.5" y1="209.5" x2="668.5" y2="215" stroke="#ff00ff" stroke-width="1"/>
<line x1="668.5" y1="216.5" x2="668.5" y2="241.5" stroke="#ff00ff" stroke-width="1"/>
<line x1="668.5" y1="242.5" x2="668.5" y2="245.5" stroke="#ff00ff" stroke-width="1"/>
<line x1="687.5" y1="214.5" x2="687.5" y2="232.5" stroke="#ff00ff" stroke-width="1"/>
<line x1="687.5" y1="234" x2="687.5" y2="239" stroke="#ff00ff" stroke-width="1"/>
<line x1="687.5" y1="240.5" x2="687.5" y2="245.5" stroke="#ff00ff" stroke-width="1"/>
<line x1="668.5" y1="245.5" x2="674" y2="245.5" stroke="#ff00ff" stroke-width="1"/>
<line x1="675.5" y1="245.5" x2="687.5" y2="245.5" stroke="#ff00ff" stroke-width="1"/>
<line x1="674.5" y1="236.5" x2="687.5" y2="236.5" stroke="#ff00ff" stroke-width="1"/>
<line x1="675.5" y1="207.5" x2="687" y2="207.5" stroke="#ff00ff" stroke-width="1"/>
<path d="M687.5,148.5 H692 L695.5,155.5 V214.5 H687.5 Z" stroke="#ffffff" fill="none" stroke-width="1"/>
<line x1="687.5" y1="182.5" x2="695.5" y2="182.5" stroke="#ffffff" stroke-width="1"/>
<line x1="687.5" y1="160.5" x2="695.5" y2="160.5" stroke="#ffffff" stroke-width="1"/>
<line x1="668.5" y1="196.5" x2="687.5" y2="196.5" stroke="#ffffff" stroke-width="1"/>
<line x1="688.5" y1="183.5" x2="688.5" y2="214.5" stroke="#ffff00" stroke-width="1"/>
<rect x="668.5" y="165" width="18.5" height="13" fill="#000"/>
<rect x="669" y="167.5" width="18" height="8.0" fill="#ffffff"/>
<rect x="669" y="165" width="1.2000000000000455" height="3" fill="#ffffff"/>
<rect x="669" y="175" width="1.2000000000000455" height="3" fill="#ffffff"/>
<rect x="671" y="165" width="1.2000000000000455" height="3" fill="#ffffff"/>
<rect x="671" y="175" width="1.2000000000000455" height="3" fill="#ffffff"/>
<rect x="674" y="165" width="1.2000000000000455" height="3" fill="#ffffff"/>
<rect x="674" y="175" width="1.2000000000000455" height="3" fill="#ffffff"/>
<rect x="676" y="165" width="1.2000000000000455" height="3" fill="#ffffff"/>
<rect x="676" y="175" width="1.2000000000000455" height="3" fill="#ffffff"/>
<rect x="678" y="165" width="1.2000000000000455" height="3" fill="#ffffff"/>
<rect x="678" y="175" width="1.2000000000000455" height="3" fill="#ffffff"/>
<rect x="680" y="165" width="1.2000000000000455" height="3" fill="#ffffff"/>
<rect x="680" y="175" width="1.2000000000000455" height="3" fill="#ffffff"/>
<rect x="683" y="165" width="1.2000000000000455" height="3" fill="#ffffff"/>
<rect x="683" y="175" width="1.2000000000000455" height="3" fill="#ffffff"/>
<rect x="685" y="165" width="1.2000000000000455" height="3" fill="#ffffff"/>
<rect x="685" y="175" width="1.2000000000000455" height="3" fill="#ffffff"/>
<rect x="670" y="171" width="1" height="1.5" fill="#000"/>
<rect x="670" y="173" width="1" height="1.5" fill="#000"/>
<rect x="674" y="169" width="1" height="1.5" fill="#000"/>
<rect x="678" y="170" width="1" height="1.5" fill="#000"/>
<rect x="678" y="172" width="1" height="1.5" fill="#000"/>
<rect x="681" y="169.5" width="1" height="1.5" fill="#000"/>
<rect x="683" y="172" width="1" height="1.5" fill="#000"/>
<rect x="685" y="169.5" width="1" height="1.5" fill="#000"/>
<rect x="685" y="173" width="1" height="1.5" fill="#000"/>
<rect x="672" y="174" width="1" height="1.5" fill="#000"/>
<rect x="676" y="174" width="1" height="1.5" fill="#000"/>
<rect x="676" y="166" width="10" height="1.5" fill="#a0f070"/>
<path d="M700.5,165.5 H707 Q708.5,165.5 708.5,167 V176 Q708.5,177.5 707,177.5 H700.5 Z" stroke="#ffffff" fill="none" stroke-width="1"/>
<path d="M700.5,165.5 H697.5 Q696,168 697.5,171.5 Q696,175 697.5,177.5 H700.5" stroke="#ffffff" fill="none" stroke-width="1"/>
<line x1="700.5" y1="168.5" x2="708.5" y2="168.5" stroke="#ffffff" stroke-width="1"/>
<line x1="700.5" y1="174.5" x2="708.5" y2="174.5" stroke="#ffffff" stroke-width="1"/>
<rect x="648" y="167" width="12" height="8" fill="#000"/>
<rect x="648.5" y="166.5" width="4.0" height="8.0" stroke="#ffffff" fill="none" stroke-width="1"/>
<rect x="653.5" y="167.5" width="10.0" height="4.0" stroke="#ffffff" fill="none" stroke-width="1"/>
<rect x="665" y="167" width="3.5" height="4" fill="#ff00ff"/>
<line x1="677.5" y1="133" x2="677.5" y2="165" stroke="#ff0000" stroke-width="1" stroke-dasharray="12 2 3 2"/>
<line x1="655" y1="169.5" x2="662" y2="169.5" stroke="#ff0000" stroke-width="1" stroke-dasharray="3 1"/>
<line x1="655" y1="171.5" x2="668" y2="171.5" stroke="#ff0000" stroke-width="1"/>
<line x1="688" y1="171.5" x2="716" y2="171.5" stroke="#ff0000" stroke-width="1"/>
<line x1="643.5" y1="153.5" x2="643.5" y2="176.5" stroke="#ff0000" stroke-width="1"/>
<line x1="650.5" y1="153.5" x2="650.5" y2="179.5" stroke="#ff0000" stroke-width="1"/>
<line x1="626" y1="203.5" x2="647.5" y2="203.5" stroke="#ff0000" stroke-width="1"/>
<line x1="649" y1="203.5" x2="666" y2="203.5" stroke="#ff0000" stroke-width="1"/>
<line x1="667" y1="203.5" x2="679" y2="203.5" stroke="#ff0000" stroke-width="1"/>
<line x1="681" y1="203.5" x2="693" y2="203.5" stroke="#ff0000" stroke-width="1"/>
<line x1="621" y1="227.5" x2="694.5" y2="227.5" stroke="#ff0000" stroke-width="1"/>
<line x1="676" y1="199.5" x2="693" y2="199.5" stroke="#ff0000" stroke-width="1"/>
<line x1="577.5" y1="254" x2="577.5" y2="286" stroke="#ff0000" stroke-width="1"/>
<line x1="743.5" y1="256.5" x2="743.5" y2="286" stroke="#ff0000" stroke-width="1"/>
<rect x="603.0" y="278.5" width="15.0" height="10.0" fill="#c8ec8c"/>
<rect x="608.0" y="266.5" width="5.0" height="18.0" stroke="#ffffff" fill="none" stroke-width="1"/>
<line x1="609.0" y1="268" x2="609.0" y2="282" stroke="#ff00ff" stroke-width="1"/>
<line x1="612.0" y1="268" x2="612.0" y2="282" stroke="#ff00ff" stroke-width="1"/>
<rect x="607.5" y="283" width="6.0" height="4" fill="#fff"/>
<line x1="610.5" y1="264" x2="610.5" y2="288" stroke="#ff0000" stroke-width="1"/>
<rect x="703.0" y="278.5" width="15.0" height="10.0" fill="#c8ec8c"/>
<rect x="708.0" y="266.5" width="5.0" height="18.0" stroke="#ffffff" fill="none" stroke-width="1"/>
<line x1="709.0" y1="268" x2="709.0" y2="282" stroke="#ff00ff" stroke-width="1"/>
<line x1="712.0" y1="268" x2="712.0" y2="282" stroke="#ff00ff" stroke-width="1"/>
<rect x="707.5" y="283" width="6.0" height="4" fill="#fff"/>
<line x1="710.5" y1="264" x2="710.5" y2="288" stroke="#ff0000" stroke-width="1"/>
<line x1="547" y1="180.5" x2="556.5" y2="180.5" stroke="#00ff00" stroke-width="1"/>
<line x1="556.5" y1="180.5" x2="641.5" y2="153.5" stroke="#00ff00" stroke-width="1"/>
<g shape-rendering="auto">
<text x="550" y="179.7" fill="#00ff00" stroke="#00ff00" font-size="6.5" text-anchor="start" font-family='"Liberation Sans", "Noto Sans CJK SC", sans-serif' textLength="2.9" lengthAdjust="spacingAndGlyphs">7</text>
</g>
<line x1="547" y1="192.5" x2="556.5" y2="192.5" stroke="#00ff00" stroke-width="1"/>
<line x1="556.5" y1="192.5" x2="638" y2="167.5" stroke="#00ff00" stroke-width="1"/>
<g shape-rendering="auto">
<text x="550" y="191.7" fill="#00ff00" stroke="#00ff00" font-size="6.5" text-anchor="start" font-family='"Liberation Sans", "Noto Sans CJK SC", sans-serif' textLength="2.9" lengthAdjust="spacingAndGlyphs">8</text>
</g>
<line x1="547" y1="205.5" x2="556.5" y2="205.5" stroke="#00ff00" stroke-width="1"/>
<line x1="556.5" y1="205.5" x2="645" y2="173.5" stroke="#00ff00" stroke-width="1"/>
<g shape-rendering="auto">
<text x="550" y="204.7" fill="#00ff00" stroke="#00ff00" font-size="6.5" text-anchor="start" font-family='"Liberation Sans", "Noto Sans CJK SC", sans-serif' textLength="2.9" lengthAdjust="spacingAndGlyphs">9</text>
</g>
<line x1="572.5" y1="214.5" x2="581.5" y2="214.5" stroke="#00ff00" stroke-width="1"/>
<line x1="581.5" y1="214.5" x2="652" y2="180" stroke="#00ff00" stroke-width="1"/>
<g shape-rendering="auto">
<text x="574" y="213.7" fill="#00ff00" stroke="#00ff00" font-size="6.5" text-anchor="start" font-family='"Liberation Sans", "Noto Sans CJK SC", sans-serif' textLength="5.8" lengthAdjust="spacingAndGlyphs">10</text>
</g>
<line x1="545" y1="216.5" x2="553" y2="216.5" stroke="#00ff00" stroke-width="1"/>
<line x1="553" y1="216.5" x2="610" y2="272" stroke="#00ff00" stroke-width="1"/>
<g shape-rendering="auto">
<text x="547" y="215.7" fill="#00ff00" stroke="#00ff00" font-size="6.5" text-anchor="start" font-family='"Liberation Sans", "Noto Sans CJK SC", sans-serif' textLength="5.8" lengthAdjust="spacingAndGlyphs">14</text>
</g>
<line x1="545" y1="240.5" x2="553" y2="240.5" stroke="#00ff00" stroke-width="1"/>
<line x1="553" y1="240.5" x2="604" y2="281" stroke="#00ff00" stroke-width="1"/>
<g shape-rendering="auto">
<text x="547" y="239.7" fill="#00ff00" stroke="#00ff00" font-size="6.5" text-anchor="start" font-family='"Liberation Sans", "Noto Sans CJK SC", sans-serif' textLength="5.8" lengthAdjust="spacingAndGlyphs">15</text>
</g>
<line x1="702" y1="123.5" x2="710.5" y2="123.5" stroke="#00ff00" stroke-width="1"/>
<line x1="702" y1="123.5" x2="661" y2="164" stroke="#00ff00" stroke-width="1"/>
<g shape-rendering="auto">
<text x="704" y="122.7" fill="#00ff00" stroke="#00ff00" font-size="6.5" text-anchor="start" font-family='"Liberation Sans", "Noto Sans CJK SC", sans-serif' textLength="5.8" lengthAdjust="spacingAndGlyphs">11</text>
</g>
<line x1="710.5" y1="143.5" x2="718.5" y2="143.5" stroke="#00ff00" stroke-width="1"/>
<line x1="710.5" y1="143.5" x2="685" y2="165.5" stroke="#00ff00" stroke-width="1"/>
<g shape-rendering="auto">
<text x="712" y="142.7" fill="#00ff00" stroke="#00ff00" font-size="6.5" text-anchor="start" font-family='"Liberation Sans", "Noto Sans CJK SC", sans-serif' textLength="5.8" lengthAdjust="spacingAndGlyphs">12</text>
</g>
<line x1="707.5" y1="196.5" x2="717" y2="196.5" stroke="#00ff00" stroke-width="1"/>
<line x1="707.5" y1="196.5" x2="674" y2="206.5" stroke="#00ff00" stroke-width="1"/>
<g shape-rendering="auto">
<text x="709" y="195.7" fill="#00ff00" stroke="#00ff00" font-size="6.5" text-anchor="start" font-family='"Liberation Sans", "Noto Sans CJK SC", sans-serif' textLength="5.8" lengthAdjust="spacingAndGlyphs">18</text>
</g>
<line x1="707.5" y1="219.5" x2="717" y2="219.5" stroke="#00ff00" stroke-width="1"/>
<line x1="707.5" y1="219.5" x2="671" y2="225" stroke="#00ff00" stroke-width="1"/>
<g shape-rendering="auto">
<text x="709" y="218.7" fill="#00ff00" stroke="#00ff00" font-size="6.5" text-anchor="start" font-family='"Liberation Sans", "Noto Sans CJK SC", sans-serif' textLength="5.8" lengthAdjust="spacingAndGlyphs">17</text>
</g>
<line x1="668.5" y1="139.5" x2="812.5" y2="139.5" stroke="#00ff00" stroke-width="1"/>
<line x1="812.5" y1="139.5" x2="812.5" y2="287.5" stroke="#00ff00" stroke-width="1"/>
<line x1="718" y1="287.5" x2="812.5" y2="287.5" stroke="#00ff00" stroke-width="1"/>
<line x1="763.5" y1="259.5" x2="778" y2="259.5" stroke="#00ff00" stroke-width="1"/>
<line x1="761.5" y1="282.5" x2="778" y2="282.5" stroke="#00ff00" stroke-width="1"/>
<line x1="777.5" y1="259.5" x2="777.5" y2="282.5" stroke="#00ff00" stroke-width="1"/>
<line x1="557.5" y1="268" x2="557.5" y2="323" stroke="#00ff00" stroke-width="1"/>
<line x1="763.5" y1="268" x2="763.5" y2="323" stroke="#00ff00" stroke-width="1"/>
<line x1="557.5" y1="322.5" x2="763.5" y2="322.5" stroke="#00ff00" stroke-width="1"/>
<line x1="577.5" y1="286" x2="577.5" y2="310" stroke="#00ff00" stroke-width="1"/>
<line x1="743.5" y1="286" x2="743.5" y2="310" stroke="#00ff00" stroke-width="1"/>
<line x1="577.5" y1="309.5" x2="743.5" y2="309.5" stroke="#00ff00" stroke-width="1"/>
<line x1="610.5" y1="288" x2="610.5" y2="299" stroke="#00ff00" stroke-width="1"/>
<line x1="710.5" y1="288" x2="710.5" y2="299" stroke="#00ff00" stroke-width="1"/>
<line x1="610.5" y1="298.5" x2="710.5" y2="298.5" stroke="#00ff00" stroke-width="1"/>
<line x1="625" y1="197.5" x2="650" y2="197.5" stroke="#00ff00" stroke-width="1"/>
<line x1="625" y1="209.5" x2="650" y2="209.5" stroke="#00ff00" stroke-width="1"/>
<line x1="622.5" y1="180.5" x2="650.5" y2="180.5" stroke="#00ff00" stroke-width="1"/>
<line x1="622.5" y1="188.5" x2="646" y2="188.5" stroke="#00ff00" stroke-width="1"/>
<line x1="640.5" y1="166.5" x2="640.5" y2="188.5" stroke="#00ff00" stroke-width="1"/>
<line x1="646.5" y1="166.5" x2="646.5" y2="188.5" stroke="#00ff00" stroke-width="1"/>
<line x1="619.5" y1="221.5" x2="648" y2="221.5" stroke="#00ff00" stroke-width="1"/>
<line x1="619.5" y1="233.5" x2="648" y2="233.5" stroke="#00ff00" stroke-width="1"/>
<g shape-rendering="auto">
<text x="656.7" y="297.8" fill="#00ff00" stroke="#00ff00" font-size="6.5" text-anchor="start" font-family='"Liberation Sans", "Noto Sans CJK SC", sans-serif' textLength="8.5" lengthAdjust="spacingAndGlyphs">126</text>
<text x="656.7" y="309" fill="#00ff00" stroke="#00ff00" font-size="6.5" text-anchor="start" font-family='"Liberation Sans", "Noto Sans CJK SC", sans-serif' textLength="8.5" lengthAdjust="spacingAndGlyphs">210</text>
<text x="655.3" y="322" fill="#00ff00" stroke="#00ff00" font-size="8.5" text-anchor="start" font-family='"Liberation Sans", "Noto Sans CJK SC", sans-serif' textLength="13" lengthAdjust="spacingAndGlyphs">260</text>
<text x="811" y="220" fill="#00ff00" stroke="#00ff00" font-size="9" text-anchor="start" font-family='"Liberation Sans", "Noto Sans CJK SC", sans-serif' transform="rotate(-90 811 220)" textLength="12.3" lengthAdjust="spacingAndGlyphs">187</text>
<text x="775.8" y="275.8" fill="#00ff00" stroke="#00ff00" font-size="8" text-anchor="start" font-family='"Liberation Sans", "Noto Sans CJK SC", sans-serif' transform="rotate(-90 775.8 275.8)" textLength="9" lengthAdjust="spacingAndGlyphs">29</text>
<text x="624.5" y="210" fill="#00ff00" stroke="#00ff00" font-size="5.5" text-anchor="start" font-family='"Liberation Sans", "Noto Sans CJK SC", sans-serif' transform="rotate(-90 624.5 210)">Φ15</text>
<text x="621" y="201" fill="#00ff00" stroke="#00ff00" font-size="3.6" text-anchor="start" font-family='"Liberation Sans", "Noto Sans CJK SC", sans-serif' transform="rotate(-90 621 201)">H7</text>
<text x="626.5" y="201" fill="#00ff00" stroke="#00ff00" font-size="3.6" text-anchor="start" font-family='"Liberation Sans", "Noto Sans CJK SC", sans-serif' transform="rotate(-90 626.5 201)">r6</text>
<text x="618" y="234" fill="#00ff00" stroke="#00ff00" font-size="5.5" text-anchor="start" font-family='"Liberation Sans", "Noto Sans CJK SC", sans-serif' transform="rotate(-90 618 234)">Φ15</text>
<text x="614.5" y="225" fill="#00ff00" stroke="#00ff00" font-size="3.6" text-anchor="start" font-family='"Liberation Sans", "Noto Sans CJK SC", sans-serif' transform="rotate(-90 614.5 225)">H7</text>
<text x="620" y="225" fill="#00ff00" stroke="#00ff00" font-size="3.6" text-anchor="start" font-family='"Liberation Sans", "Noto Sans CJK SC", sans-serif' transform="rotate(-90 620 225)">r6</text>
<text x="618" y="189" fill="#00ff00" stroke="#00ff00" font-size="5.5" text-anchor="start" font-family='"Liberation Sans", "Noto Sans CJK SC", sans-serif' transform="rotate(-90 618 189)">Φ6</text>
<text x="615.5" y="183" fill="#00ff00" stroke="#00ff00" font-size="3.6" text-anchor="start" font-family='"Liberation Sans", "Noto Sans CJK SC", sans-serif' transform="rotate(-90 615.5 183)">H7</text>
<text x="621" y="183" fill="#00ff00" stroke="#00ff00" font-size="3.6" text-anchor="start" font-family='"Liberation Sans", "Noto Sans CJK SC", sans-serif' transform="rotate(-90 621 183)">g6</text>
<text x="657.2" y="95" fill="#00ff00" stroke="#00ff00" font-size="5" text-anchor="start" font-family='"Liberation Sans", "Noto Sans CJK SC", sans-serif' textLength="8.8" lengthAdjust="spacingAndGlyphs">A-A</text>
</g>
</g>
<g id="v3">
<path d="M289.5,381.5 H201.5 L177.5,405.5 V564.5 L201.5,587.5 H289.5" stroke="#ffffff" fill="none" stroke-width="1"/>
<path d="M303.5,381.5 H391.5 L415.5,405.5 V563.5 L391.5,587.5 H303.5" stroke="#ffffff" fill="none" stroke-width="1"/>
<path d="M281.5,381.5 V401.5 A15,15 0 0 0 311.5,401.5 V381.5" stroke="#ffffff" fill="none" stroke-width="1"/>
<path d="M289.5,381.5 V401.5 A7,7 0 0 0 303.5,401.5 V381.5" stroke="#ffffff" fill="none" stroke-width="1"/>
<path d="M281.5,587.5 V568.5 A15,15 0 0 1 311.5,568.5 V587.5" stroke="#ffffff" fill="none" stroke-width="1"/>
<path d="M289.5,587.5 V568.5 A7,7 0 0 1 303.5,568.5 V587.5" stroke="#ffffff" fill="none" stroke-width="1"/>
<rect x="182.5" y="455.5" width="225.0" height="28.0" stroke="#ffffff" fill="none" stroke-width="1"/>
<line x1="223.5" y1="455.5" x2="223.5" y2="483.5" stroke="#ffffff" stroke-width="1"/>
<line x1="369.5" y1="455.5" x2="369.5" y2="483.5" stroke="#ffffff" stroke-width="1"/>
<rect x="189.5" y="458.5" width="33.0" height="22.0" stroke="#ffffff" fill="none" stroke-width="1"/>
<rect x="370.5" y="458.5" width="32.0" height="22.0" stroke="#ffffff" fill="none" stroke-width="1"/>
<line x1="214.5" y1="458.5" x2="214.5" y2="480.5" stroke="#ffffff" stroke-width="1"/>
<line x1="216.5" y1="458.5" x2="216.5" y2="480.5" stroke="#ffffff" stroke-width="1"/>
<line x1="220.5" y1="458.5" x2="220.5" y2="480.5" stroke="#ffffff" stroke-width="1"/>
<line x1="372.5" y1="458.5" x2="372.5" y2="480.5" stroke="#ffffff" stroke-width="1"/>
<line x1="376.5" y1="458.5" x2="376.5" y2="480.5" stroke="#ffffff" stroke-width="1"/>
<line x1="193.5" y1="432" x2="193.5" y2="455.5" stroke="#ffffff" stroke-width="1"/>
<line x1="200.5" y1="432" x2="200.5" y2="455.5" stroke="#ffffff" stroke-width="1"/>
<line x1="189.0" y1="428.5" x2="205.0" y2="428.5" stroke="#ffffff" stroke-width="1"/>
<path d="M189.0,428.5 Q193.5,429 193.5,434" stroke="#ffffff" fill="none" stroke-width="1"/>
<path d="M205.0,428.5 Q200.5,429 200.5,434" stroke="#ffffff" fill="none" stroke-width="1"/>
<line x1="391.5" y1="432" x2="391.5" y2="455.5" stroke="#ffffff" stroke-width="1"/>
<line x1="399.5" y1="432" x2="399.5" y2="455.5" stroke="#ffffff" stroke-width="1"/>
<line x1="387.0" y1="428.5" x2="404.0" y2="428.5" stroke="#ffffff" stroke-width="1"/>
<path d="M387.0,428.5 Q391.5,429 391.5,434" stroke="#ffffff" fill="none" stroke-width="1"/>
<path d="M404.0,428.5 Q399.5,429 399.5,434" stroke="#ffffff" fill="none" stroke-width="1"/>
<circle cx="197" cy="464.5" r="2" stroke="#ffffff" fill="none" stroke-width="1"/>
<circle cx="197" cy="472.5" r="4.5" stroke="#ffffff" fill="none" stroke-width="1"/>
<circle cx="197" cy="472.5" r="2.5" stroke="#ffffff" fill="none" stroke-width="1"/>
<circle cx="208.5" cy="464.5" r="4" stroke="#ffffff" fill="none" stroke-width="1"/>
<circle cx="208.5" cy="464.5" r="2" stroke="#ffffff" fill="none" stroke-width="1"/>
<circle cx="208.5" cy="472.5" r="2" stroke="#ffffff" fill="none" stroke-width="1"/>
<line x1="195" y1="466" x2="194" y2="469" stroke="#ffffff" stroke-width="1"/>
<line x1="199" y1="466" x2="200" y2="469" stroke="#ffffff" stroke-width="1"/>
<line x1="206.5" y1="468" x2="206.5" y2="471" stroke="#ffffff" stroke-width="1"/>
<line x1="210.5" y1="468" x2="210.5" y2="471" stroke="#ffffff" stroke-width="1"/>
<circle cx="384.5" cy="464.5" r="4" stroke="#ffffff" fill="none" stroke-width="1"/>
<circle cx="384.5" cy="464.5" r="2" stroke="#ffffff" fill="none" stroke-width="1"/>
<circle cx="384.5" cy="472.5" r="2" stroke="#ffffff" fill="none" stroke-width="1"/>
<circle cx="395.5" cy="464.5" r="2" stroke="#ffffff" fill="none" stroke-width="1"/>
<circle cx="395.5" cy="472.5" r="4.5" stroke="#ffffff" fill="none" stroke-width="1"/>
<circle cx="395.5" cy="472.5" r="2.5" stroke="#ffffff" fill="none" stroke-width="1"/>
<line x1="382.5" y1="468" x2="382.5" y2="471" stroke="#ffffff" stroke-width="1"/>
<line x1="386.5" y1="468" x2="386.5" y2="471" stroke="#ffffff" stroke-width="1"/>
<line x1="393.5" y1="466" x2="392.5" y2="469" stroke="#ffffff" stroke-width="1"/>
<line x1="397.5" y1="466" x2="398.5" y2="469" stroke="#ffffff" stroke-width="1"/>
<line x1="187" y1="464.5" x2="226" y2="464.5" stroke="#ff0000" stroke-width="1"/>
<line x1="182" y1="472.5" x2="212" y2="472.5" stroke="#ff0000" stroke-width="1"/>
<line x1="197" y1="460" x2="197" y2="477" stroke="#ff0000" stroke-width="1"/>
<line x1="208.5" y1="460" x2="208.5" y2="485" stroke="#ff0000" stroke-width="1"/>
<line x1="366" y1="464.5" x2="405" y2="464.5" stroke="#ff0000" stroke-width="1"/>
<line x1="371" y1="472.5" x2="411" y2="472.5" stroke="#ff0000" stroke-width="1"/>
<line x1="384.5" y1="460" x2="384.5" y2="485" stroke="#ff0000" stroke-width="1"/>
<line x1="395.5" y1="460" x2="395.5" y2="477" stroke="#ff0000" stroke-width="1"/>
<clipPath id="hf3"><path d="M236.5,483.5 Q236.5,476 241,472 L244,470 H252.5 L255,472 Q259,476 259,483.5 Z"/></clipPath>
<g clip-path="url(#hf3)" stroke="#00ff00" stroke-width="1" shape-rendering="crispEdges">
<line x1="222.00" y1="484" x2="236.00" y2="470"/>
<line x1="225.11" y1="484" x2="239.11" y2="470"/>
<line x1="228.22" y1="484" x2="242.22" y2="470"/>
<line x1="231.33" y1="484" x2="245.33" y2="470"/>
<line x1="234.44" y1="484" x2="248.44" y2="470"/>
<line x1="237.55" y1="484" x2="251.55" y2="470"/>
<line x1="240.66" y1="484" x2="254.66" y2="470"/>
<line x1="243.77" y1="484" x2="257.77" y2="470"/>
<line x1="246.88" y1="484" x2="260.88" y2="470"/>
<line x1="249.99" y1="484" x2="263.99" y2="470"/>
<line x1="253.10" y1="484" x2="267.10" y2="470"/>
<line x1="256.21" y1="484" x2="270.21" y2="470"/>
</g>
<path d="M236.5,483.5 Q236.5,476 241,472 L244,470 H252.5 L255,472 Q259,476 259,483.5 Z" fill="none" stroke="#00ff00" shape-rendering="auto"/>
<clipPath id="hf4"><path d="M323.5,483.5 Q323.5,476 328,472 L331,470 H339.5 L342,472 Q345.5,476 345.5,483.5 Z"/></clipPath>
<g clip-path="url(#hf4)" stroke="#00ff00" stroke-width="1" shape-rendering="crispEdges">
<line x1="309.00" y1="484" x2="323.00" y2="470"/>
<line x1="312.11" y1="484" x2="326.11" y2="470"/>
<line x1="315.22" y1="484" x2="329.22" y2="470"/>
<line x1="318.33" y1="484" x2="332.33" y2="470"/>
<line x1="321.44" y1="484" x2="335.44" y2="470"/>
<line x1="324.55" y1="484" x2="338.55" y2="470"/>
<line x1="327.66" y1="484" x2="341.66" y2="470"/>
<line x1="330.77" y1="484" x2="344.77" y2="470"/>
<line x1="333.88" y1="484" x2="347.88" y2="470"/>
<line x1="336.99" y1="484" x2="350.99" y2="470"/>
<line x1="340.10" y1="484" x2="354.10" y2="470"/>
<line x1="343.21" y1="484" x2="357.21" y2="470"/>
</g>
<path d="M323.5,483.5 Q323.5,476 328,472 L331,470 H339.5 L342,472 Q345.5,476 345.5,483.5 Z" fill="none" stroke="#00ff00" shape-rendering="auto"/>
<rect x="244.5" y="483.5" width="9.0" height="6.0" stroke="#ffffff" fill="none" stroke-width="1"/>
<rect x="327.5" y="483.5" width="9.0" height="6.0" stroke="#ffffff" fill="none" stroke-width="1"/>
<rect x="246" y="486.5" width="6.5" height="3.5" fill="#ffffff"/>
<rect x="329.5" y="486.5" width="5.0" height="3.5" fill="#ffffff"/>
<line x1="248.5" y1="478" x2="248.5" y2="487" stroke="#ff00ff" stroke-width="2"/>
<line x1="332" y1="478" x2="332" y2="487" stroke="#ff00ff" stroke-width="2"/>
<line x1="248.5" y1="475" x2="248.5" y2="479" stroke="#ff0000" stroke-width="1"/>
<line x1="332" y1="475" x2="332" y2="479" stroke="#ff0000" stroke-width="1"/>
<line x1="212.5" y1="490.5" x2="212.5" y2="508.5" stroke="#ff00ff" stroke-width="1"/>
<line x1="212.5" y1="490.5" x2="230.5" y2="490.5" stroke="#ff00ff" stroke-width="1"/>
<line x1="233.5" y1="490.5" x2="238.5" y2="490.5" stroke="#ff00ff" stroke-width="1"/>
<line x1="243.5" y1="490.5" x2="308" y2="490.5" stroke="#ff00ff" stroke-width="1"/>
<line x1="313" y1="490.5" x2="318.5" y2="490.5" stroke="#ff00ff" stroke-width="1"/>
<line x1="322.5" y1="490.5" x2="350" y2="490.5" stroke="#ff00ff" stroke-width="1"/>
<line x1="354" y1="490.5" x2="359.5" y2="490.5" stroke="#ff00ff" stroke-width="1"/>
<line x1="364" y1="490.5" x2="380" y2="490.5" stroke="#ff00ff" stroke-width="1"/>
<line x1="212.5" y1="508.5" x2="238" y2="508.5" stroke="#ff00ff" stroke-width="1"/>
<path d="M242,508.5 H256 L258.5,505.5 H298.5 L301.5,508.5" stroke="#ff00ff" fill="none" stroke-width="1"/>
<line x1="262" y1="507.5" x2="298.5" y2="507.5" stroke="#ff00ff" stroke-width="1"/>
<path d="M296.5,508.5 H298.5 L301.5,505.5 H322.5" stroke="#ff00ff" fill="none" stroke-width="1"/>
<path d="M346.5,505.5 H350 L353,508.5" stroke="#ff00ff" fill="none" stroke-width="1"/>
<line x1="228.5" y1="487" x2="228.5" y2="510.5" stroke="#ff00ff" stroke-width="2.5"/>
<line x1="249" y1="490.5" x2="249" y2="508.5" stroke="#ff00ff" stroke-width="2"/>
<line x1="357" y1="490.5" x2="357" y2="508.5" stroke="#ff00ff" stroke-width="3"/>
<line x1="371.5" y1="486.5" x2="371.5" y2="512" stroke="#ff00ff" stroke-width="2.5"/>
<circle cx="228.5" cy="498.5" r="6" stroke="#ff00ff" fill="none" stroke-width="1"/>
<circle cx="371.5" cy="498.5" r="5.5" stroke="#ff00ff" fill="none" stroke-width="1"/>
<line x1="221" y1="498.5" x2="244" y2="498.5" stroke="#ff00ff" stroke-width="1"/>
<line x1="354" y1="498.5" x2="383.5" y2="498.5" stroke="#ff00ff" stroke-width="1"/>
<line x1="262.5" y1="490.5" x2="262.5" y2="507.5" stroke="#ff00ff" stroke-width="1"/>
<line x1="271.5" y1="490.5" x2="271.5" y2="507.5" stroke="#ff00ff" stroke-width="1"/>
<line x1="289.5" y1="490.5" x2="289.5" y2="507.5" stroke="#ff00ff" stroke-width="1"/>
<line x1="280.5" y1="485.5" x2="280.5" y2="513.5" stroke="#ff00ff" stroke-width="1"/>
<line x1="307.5" y1="487" x2="307.5" y2="510.5" stroke="#ff00ff" stroke-width="1"/>
<rect x="322.5" y="490.5" width="24.0" height="18.0" stroke="#ff00ff" fill="none" stroke-width="1"/>
<line x1="330.5" y1="490.5" x2="330.5" y2="508.5" stroke="#ff00ff" stroke-width="1"/>
<line x1="338.5" y1="480.5" x2="338.5" y2="516.5" stroke="#ff00ff" stroke-width="1"/>
<line x1="379.5" y1="490.5" x2="379.5" y2="508" stroke="#ff00ff" stroke-width="1"/>
<line x1="371.5" y1="507.5" x2="379.5" y2="507.5" stroke="#ff00ff" stroke-width="1"/>
<rect x="221.5" y="509" width="15.0" height="7" fill="#000"/>
<rect x="221.5" y="508.5" width="15.0" height="8.0" stroke="#ffffff" fill="none" stroke-width="1"/>
<line x1="221.5" y1="512.5" x2="236.5" y2="512.5" stroke="#ffffff" stroke-width="1"/>
<path d="M223.0,520.5 H234.5 V527 Q234.5,530.5 230.5,530.5 H227.0 Q223.0,530.5 223.0,527 Z" stroke="#ffffff" fill="none" stroke-width="1"/>
<line x1="225.5" y1="520.5" x2="225.5" y2="530.5" stroke="#ffffff" stroke-width="1"/>
<line x1="232.5" y1="520.5" x2="232.5" y2="530.5" stroke="#ffffff" stroke-width="1"/>
<path d="M222.5,516.5 L224.5,520 M235.5,516.5 L233.5,520" stroke="#00ff00" fill="none" stroke-width="1"/>
<line x1="223.5" y1="518.5" x2="234.5" y2="518.5" stroke="#00ff00" stroke-width="1"/>
<rect x="355.5" y="509" width="15.0" height="7" fill="#000"/>
<rect x="355.5" y="508.5" width="15.0" height="8.0" stroke="#ffffff" fill="none" stroke-width="1"/>
<line x1="355.5" y1="512.5" x2="370.5" y2="512.5" stroke="#ffffff" stroke-width="1"/>
<path d="M357.0,520.5 H368.5 V527 Q368.5,530.5 364.5,530.5 H361.0 Q357.0,530.5 357.0,527 Z" stroke="#ffffff" fill="none" stroke-width="1"/>
<line x1="359.5" y1="520.5" x2="359.5" y2="530.5" stroke="#ffffff" stroke-width="1"/>
<line x1="366.5" y1="520.5" x2="366.5" y2="530.5" stroke="#ffffff" stroke-width="1"/>
<path d="M356.5,516.5 L358.5,520 M369.5,516.5 L367.5,520" stroke="#00ff00" fill="none" stroke-width="1"/>
<line x1="357.5" y1="518.5" x2="368.5" y2="518.5" stroke="#00ff00" stroke-width="1"/>
<line x1="228.5" y1="484" x2="228.5" y2="536" stroke="#ff0000" stroke-width="1"/>
<line x1="362.5" y1="505" x2="362.5" y2="535.5" stroke="#ff0000" stroke-width="1"/>
<line x1="296.5" y1="376" x2="296.5" y2="597" stroke="#ff0000" stroke-width="1"/>
<line x1="277" y1="401.5" x2="316" y2="401.5" stroke="#ff0000" stroke-width="1"/>
<line x1="278" y1="568.5" x2="311.5" y2="568.5" stroke="#ff0000" stroke-width="1"/>
<line x1="292" y1="398.5" x2="322" y2="425.5" stroke="#00ff00" stroke-width="1"/>
<rect x="320" y="424" width="4" height="4" fill="#00ff00"/>
<polygon points="299.5,402 305.5,403.5 303,406.5" fill="#00ff00"/>
<line x1="305" y1="405" x2="312" y2="407.5" stroke="#00ff00" stroke-width="1"/>
<line x1="292" y1="571.5" x2="317.5" y2="546.5" stroke="#00ff00" stroke-width="1"/>
<rect x="315.5" y="545" width="4.0" height="4" fill="#00ff00"/>
<polygon points="294,569 301.5,563.5 303,566" fill="#00ff00"/>
<line x1="302" y1="565" x2="311" y2="562" stroke="#00ff00" stroke-width="1"/>
<line x1="200.5" y1="437.5" x2="391" y2="437.5" stroke="#00ff00" stroke-width="1"/>
<line x1="200.5" y1="437.5" x2="200.5" y2="448.5" stroke="#00ff00" stroke-width="1"/>
<line x1="390.5" y1="437.5" x2="390.5" y2="451.5" stroke="#00ff00" stroke-width="1"/>
<line x1="185" y1="444.5" x2="209" y2="444.5" stroke="#00ff00" stroke-width="1"/>
<line x1="205" y1="448.5" x2="226.5" y2="448.5" stroke="#00ff00" stroke-width="1"/>
<line x1="212.5" y1="448.5" x2="212.5" y2="490.5" stroke="#00ff00" stroke-width="1"/>
<line x1="215.5" y1="448.5" x2="215.5" y2="479.5" stroke="#00ff00" stroke-width="1"/>
<line x1="383" y1="444.5" x2="408" y2="444.5" stroke="#00ff00" stroke-width="1"/>
<line x1="369" y1="451.5" x2="391" y2="451.5" stroke="#00ff00" stroke-width="1"/>
<line x1="377.5" y1="451" x2="377.5" y2="480" stroke="#00ff00" stroke-width="1"/>
<line x1="379.5" y1="451" x2="379.5" y2="490.5" stroke="#00ff00" stroke-width="1"/>
<line x1="316" y1="381.5" x2="326.5" y2="381.5" stroke="#00ff00" stroke-width="1"/>
<line x1="364" y1="381.5" x2="445" y2="381.5" stroke="#00ff00" stroke-width="1"/>
<line x1="326.5" y1="381.5" x2="326.5" y2="401.5" stroke="#00ff00" stroke-width="1"/>
<line x1="316" y1="401.5" x2="326.5" y2="401.5" stroke="#00ff00" stroke-width="1"/>
<line x1="311.5" y1="587.5" x2="328.5" y2="587.5" stroke="#00ff00" stroke-width="1"/>
<line x1="387" y1="587.5" x2="445" y2="587.5" stroke="#00ff00" stroke-width="1"/>
<line x1="328.5" y1="568.5" x2="328.5" y2="587.5" stroke="#00ff00" stroke-width="1"/>
<line x1="311.5" y1="568.5" x2="328.5" y2="568.5" stroke="#00ff00" stroke-width="1"/>
<line x1="432.5" y1="381.5" x2="432.5" y2="483.5" stroke="#00ff00" stroke-width="1"/>
<line x1="444.5" y1="381.5" x2="444.5" y2="587.5" stroke="#00ff00" stroke-width="1"/>
<line x1="409" y1="455.5" x2="434" y2="455.5" stroke="#00ff00" stroke-width="1"/>
<line x1="409" y1="483.5" x2="434" y2="483.5" stroke="#00ff00" stroke-width="1"/>
<g shape-rendering="auto">
<text x="291" y="436.8" fill="#00ff00" stroke="#00ff00" font-size="6" text-anchor="start" font-family='"Liberation Sans", "Noto Sans CJK SC", sans-serif' textLength="9.5" lengthAdjust="spacingAndGlyphs">260</text>
<text x="195" y="444.3" fill="#00ff00" stroke="#00ff00" font-size="7" text-anchor="start" font-family='"Liberation Sans", "Noto Sans CJK SC", sans-serif' textLength="6" lengthAdjust="spacingAndGlyphs">10</text>
<text x="395.3" y="444.3" fill="#00ff00" stroke="#00ff00" font-size="7" text-anchor="start" font-family='"Liberation Sans", "Noto Sans CJK SC", sans-serif' textLength="6" lengthAdjust="spacingAndGlyphs">10</text>
<text x="223.5" y="448" fill="#00ff00" stroke="#00ff00" font-size="6.5" text-anchor="start" font-family='"Liberation Sans", "Noto Sans CJK SC", sans-serif' textLength="2.8" lengthAdjust="spacingAndGlyphs">3</text>
<text x="387" y="450.5" fill="#00ff00" stroke="#00ff00" font-size="6.5" text-anchor="start" font-family='"Liberation Sans", "Noto Sans CJK SC", sans-serif' textLength="2.8" lengthAdjust="spacingAndGlyphs">3</text>
<text x="325.8" y="395.2" fill="#00ff00" stroke="#00ff00" font-size="7.5" text-anchor="start" font-family='"Liberation Sans", "Noto Sans CJK SC", sans-serif' transform="rotate(-90 325.8 395.2)" textLength="6.4" lengthAdjust="spacingAndGlyphs">35</text>
<text x="327.5" y="582" fill="#00ff00" stroke="#00ff00" font-size="7.5" text-anchor="start" font-family='"Liberation Sans", "Noto Sans CJK SC", sans-serif' transform="rotate(-90 327.5 582)" textLength="6.4" lengthAdjust="spacingAndGlyphs">35</text>
<text x="432.3" y="421.8" fill="#00ff00" stroke="#00ff00" font-size="7" text-anchor="start" font-family='"Liberation Sans", "Noto Sans CJK SC", sans-serif' transform="rotate(-90 432.3 421.8)" textLength="6.4" lengthAdjust="spacingAndGlyphs">93</text>
<text x="432.3" y="473.5" fill="#00ff00" stroke="#00ff00" font-size="7" text-anchor="start" font-family='"Liberation Sans", "Noto Sans CJK SC", sans-serif' transform="rotate(-90 432.3 473.5)" textLength="8" lengthAdjust="spacingAndGlyphs">35</text>
<text x="444" y="490" fill="#00ff00" stroke="#00ff00" font-size="7" text-anchor="start" font-family='"Liberation Sans", "Noto Sans CJK SC", sans-serif' transform="rotate(-90 444 490)" textLength="10.4" lengthAdjust="spacingAndGlyphs">160</text>
</g>
</g>
<defs>
<pattern id="hgw" width="2.6" height="2.6" patternUnits="userSpaceOnUse" patternTransform="rotate(-45)"><line x1="0" y1="0" x2="0" y2="2.6" stroke="#00ff00" stroke-width="1.9"/></pattern>
<pattern id="hgw2" width="2.5" height="2.5" patternUnits="userSpaceOnUse" patternTransform="rotate(45)"><line x1="0" y1="0" x2="0" y2="2.5" stroke="#00ff00" stroke-width="1.6"/></pattern>
</defs>
<g id="v4">
<path d="M582,408.5 H615.5 V417.5 H582 Z M634.5,408.5 H646 Q648,408.5 648,411 V417.5 H634.5 Z" fill="#00ff00" stroke="none"/>
<clipPath id="hf5"><path d="M582,408.5 H615.5 V417.5 H582 Z M634.5,408.5 H648 V417.5 H634.5 Z"/></clipPath>
<g clip-path="url(#hf5)" stroke="#000" stroke-width="1" shape-rendering="crispEdges">
<line x1="571.00" y1="408" x2="581.00" y2="418"/>
<line x1="575.20" y1="408" x2="585.20" y2="418"/>
<line x1="579.40" y1="408" x2="589.40" y2="418"/>
<line x1="583.60" y1="408" x2="593.60" y2="418"/>
<line x1="587.80" y1="408" x2="597.80" y2="418"/>
<line x1="592.00" y1="408" x2="602.00" y2="418"/>
<line x1="596.20" y1="408" x2="606.20" y2="418"/>
<line x1="600.40" y1="408" x2="610.40" y2="418"/>
<line x1="604.60" y1="408" x2="614.60" y2="418"/>
<line x1="608.80" y1="408" x2="618.80" y2="418"/>
<line x1="613.00" y1="408" x2="623.00" y2="418"/>
<line x1="617.20" y1="408" x2="627.20" y2="418"/>
<line x1="621.40" y1="408" x2="631.40" y2="418"/>
<line x1="625.60" y1="408" x2="635.60" y2="418"/>
<line x1="629.80" y1="408" x2="639.80" y2="418"/>
<line x1="634.00" y1="408" x2="644.00" y2="418"/>
<line x1="638.20" y1="408" x2="648.20" y2="418"/>
<line x1="642.40" y1="408" x2="652.40" y2="418"/>
<line x1="646.60" y1="408" x2="656.60" y2="418"/>
</g>
<path d="M581.5,408.5 H646 Q648,408.5 648,411 V417.5 H581.5 Z" stroke="#ffffff" fill="none" stroke-width="1"/>
<path d="M589,445.5 H645.5 V452.5 H589 Q587.5,449 589,445.5 Z" fill="#00ff00" stroke="none"/>
<clipPath id="hf6"><path d="M588,445.5 H645.5 V452.5 H588 Z"/></clipPath>
<g clip-path="url(#hf6)" stroke="#000" stroke-width="1.3" shape-rendering="crispEdges">
<line x1="579.00" y1="453" x2="587.00" y2="445"/>
<line x1="582.20" y1="453" x2="590.20" y2="445"/>
<line x1="585.40" y1="453" x2="593.40" y2="445"/>
<line x1="588.60" y1="453" x2="596.60" y2="445"/>
<line x1="591.80" y1="453" x2="599.80" y2="445"/>
<line x1="595.00" y1="453" x2="603.00" y2="445"/>
<line x1="598.20" y1="453" x2="606.20" y2="445"/>
<line x1="601.40" y1="453" x2="609.40" y2="445"/>
<line x1="604.60" y1="453" x2="612.60" y2="445"/>
<line x1="607.80" y1="453" x2="615.80" y2="445"/>
<line x1="611.00" y1="453" x2="619.00" y2="445"/>
<line x1="614.20" y1="453" x2="622.20" y2="445"/>
<line x1="617.40" y1="453" x2="625.40" y2="445"/>
<line x1="620.60" y1="453" x2="628.60" y2="445"/>
<line x1="623.80" y1="453" x2="631.80" y2="445"/>
<line x1="627.00" y1="453" x2="635.00" y2="445"/>
<line x1="630.20" y1="453" x2="638.20" y2="445"/>
<line x1="633.40" y1="453" x2="641.40" y2="445"/>
<line x1="636.60" y1="453" x2="644.60" y2="445"/>
<line x1="639.80" y1="453" x2="647.80" y2="445"/>
<line x1="643.00" y1="453" x2="651.00" y2="445"/>
</g>
<path d="M589,445.5 H645.5 V452.5 H589 Q586.5,449 589,445.5 Z" stroke="#ffffff" fill="none" stroke-width="1"/>
<rect x="616" y="408" width="18" height="10" fill="#000"/>
<rect x="619.5" y="395.5" width="11.0" height="11.0" stroke="#ffffff" fill="none" stroke-width="1" rx="1.5"/>
<line x1="621.5" y1="396.5" x2="621.5" y2="406.5" stroke="#ffffff" stroke-width="1"/>
<line x1="628.5" y1="396.5" x2="628.5" y2="406.5" stroke="#ffffff" stroke-width="1"/>
<line x1="619.5" y1="408.5" x2="619.5" y2="445.5" stroke="#ffffff" stroke-width="1"/>
<line x1="630.5" y1="408.5" x2="630.5" y2="445.5" stroke="#ffffff" stroke-width="1"/>
<line x1="619.5" y1="412.5" x2="630.5" y2="412.5" stroke="#ffffff" stroke-width="1"/>
<line x1="619.5" y1="415.5" x2="630.5" y2="415.5" stroke="#ffffff" stroke-width="1"/>
<line x1="619.5" y1="420.5" x2="623" y2="420.5" stroke="#ffffff" stroke-width="1"/>
<line x1="627" y1="420.5" x2="630.5" y2="420.5" stroke="#ffffff" stroke-width="1"/>
<line x1="619.5" y1="423.5" x2="623" y2="423.5" stroke="#ffffff" stroke-width="1"/>
<line x1="627" y1="423.5" x2="630.5" y2="423.5" stroke="#ffffff" stroke-width="1"/>
<line x1="619.5" y1="426.5" x2="623" y2="426.5" stroke="#ffffff" stroke-width="1"/>
<line x1="627" y1="426.5" x2="630.5" y2="426.5" stroke="#ffffff" stroke-width="1"/>
<line x1="619.5" y1="429.5" x2="623" y2="429.5" stroke="#ffffff" stroke-width="1"/>
<line x1="627" y1="429.5" x2="630.5" y2="429.5" stroke="#ffffff" stroke-width="1"/>
<line x1="619.5" y1="432.5" x2="623" y2="432.5" stroke="#ffffff" stroke-width="1"/>
<line x1="627" y1="432.5" x2="630.5" y2="432.5" stroke="#ffffff" stroke-width="1"/>
<line x1="619.5" y1="435.5" x2="623" y2="435.5" stroke="#ffffff" stroke-width="1"/>
<line x1="627" y1="435.5" x2="630.5" y2="435.5" stroke="#ffffff" stroke-width="1"/>
<rect x="625.5" y="419" width="5.0" height="19" fill="#ffffff"/>
<rect x="627" y="421" width="2" height="2" fill="#000"/>
<rect x="627" y="426" width="2" height="2" fill="#000"/>
<rect x="627" y="431" width="2" height="2" fill="#000"/>
<rect x="621.5" y="445" width="7.0" height="7.5" fill="#000"/>
<rect x="617.5" y="439" width="15.0" height="6" fill="#000"/>
<path d="M617.5,445.5 V438.5 H632.5 V445.5" stroke="#ffffff" fill="none" stroke-width="1"/>
<line x1="621.5" y1="438.5" x2="621.5" y2="452.5" stroke="#ffffff" stroke-width="1"/>
<line x1="628.5" y1="438.5" x2="628.5" y2="452.5" stroke="#ffffff" stroke-width="1"/>
<rect x="594.5" y="445" width="6.0" height="7.5" fill="#000"/>
<rect x="591.5" y="439" width="12.0" height="6" fill="#000"/>
<rect x="593.5" y="417.5" width="8.0" height="4.0" stroke="#ffffff" fill="none" stroke-width="1"/>
<rect x="594.5" y="421.5" width="6.0" height="9.0" stroke="#ffffff" fill="none" stroke-width="1"/>
<rect x="593.5" y="430.5" width="8.0" height="8.0" stroke="#ffffff" fill="none" stroke-width="1"/>
<path d="M591.5,445.5 V438.5 H603.5 V445.5" stroke="#ffffff" fill="none" stroke-width="1"/>
<line x1="594.5" y1="438.5" x2="594.5" y2="452.5" stroke="#ffffff" stroke-width="1"/>
<line x1="600.5" y1="438.5" x2="600.5" y2="452.5" stroke="#ffffff" stroke-width="1"/>
<line x1="589" y1="452.5" x2="645.5" y2="452.5" stroke="#ffffff" stroke-width="1"/>
<line x1="624.5" y1="387" x2="624.5" y2="458" stroke="#ff0000" stroke-width="1"/>
<line x1="597.5" y1="403.5" x2="597.5" y2="456" stroke="#ff0000" stroke-width="1"/>
<path d="M657.5,417.5 H641.5 V431.5 H657.5 M659.5,417.5 H661.5 M659.5,431.5 H661.5 M663.5,417.5 H674.5 Q672,421 674.5,424.5 Q676.5,428 673,431.5 H663.5" stroke="#ff00ff" fill="none" stroke-width="1"/>
<line x1="552" y1="380.5" x2="561" y2="380.5" stroke="#00ff00" stroke-width="1"/>
<line x1="561" y1="380.5" x2="621.5" y2="400" stroke="#00ff00" stroke-width="1"/>
<g shape-rendering="auto">
<text x="556" y="379.7" fill="#00ff00" stroke="#00ff00" font-size="6.5" text-anchor="start" font-family='"Liberation Sans", "Noto Sans CJK SC", sans-serif' textLength="2.9" lengthAdjust="spacingAndGlyphs">1</text>
</g>
<line x1="552" y1="397.5" x2="561" y2="397.5" stroke="#00ff00" stroke-width="1"/>
<line x1="561" y1="397.5" x2="586.5" y2="408.5" stroke="#00ff00" stroke-width="1"/>
<g shape-rendering="auto">
<text x="556" y="396.7" fill="#00ff00" stroke="#00ff00" font-size="6.5" text-anchor="start" font-family='"Liberation Sans", "Noto Sans CJK SC", sans-serif' textLength="2.9" lengthAdjust="spacingAndGlyphs">2</text>
</g>
<line x1="552" y1="408.5" x2="561" y2="408.5" stroke="#00ff00" stroke-width="1"/>
<line x1="561" y1="408.5" x2="620.5" y2="427" stroke="#00ff00" stroke-width="1"/>
<g shape-rendering="auto">
<text x="556" y="407.7" fill="#00ff00" stroke="#00ff00" font-size="6.5" text-anchor="start" font-family='"Liberation Sans", "Noto Sans CJK SC", sans-serif' textLength="2.9" lengthAdjust="spacingAndGlyphs">3</text>
</g>
<line x1="552" y1="418.5" x2="561" y2="418.5" stroke="#00ff00" stroke-width="1"/>
<line x1="561" y1="418.5" x2="596" y2="431.5" stroke="#00ff00" stroke-width="1"/>
<g shape-rendering="auto">
<text x="556" y="417.7" fill="#00ff00" stroke="#00ff00" font-size="6.5" text-anchor="start" font-family='"Liberation Sans", "Noto Sans CJK SC", sans-serif' textLength="2.9" lengthAdjust="spacingAndGlyphs">4</text>
</g>
<line x1="552" y1="430.5" x2="566.5" y2="430.5" stroke="#00ff00" stroke-width="1"/>
<line x1="566.5" y1="430.5" x2="626" y2="436.5" stroke="#00ff00" stroke-width="1"/>
<g shape-rendering="auto">
<text x="556" y="429.7" fill="#00ff00" stroke="#00ff00" font-size="6.5" text-anchor="start" font-family='"Liberation Sans", "Noto Sans CJK SC", sans-serif' textLength="2.9" lengthAdjust="spacingAndGlyphs">5</text>
</g>
<line x1="552" y1="443.5" x2="569" y2="443.5" stroke="#00ff00" stroke-width="1"/>
<line x1="569" y1="443.5" x2="596" y2="441" stroke="#00ff00" stroke-width="1"/>
<g shape-rendering="auto">
<text x="556" y="442.7" fill="#00ff00" stroke="#00ff00" font-size="6.5" text-anchor="start" font-family='"Liberation Sans", "Noto Sans CJK SC", sans-serif' textLength="2.9" lengthAdjust="spacingAndGlyphs">6</text>
</g>
<rect x="620.5" y="399" width="2.0" height="2" fill="#00ff00"/>
<rect x="619.5" y="412" width="2.0" height="2" fill="#00ff00"/>
<rect x="628" y="412" width="2" height="2" fill="#00ff00"/>
<rect x="619.5" y="426" width="2.0" height="2" fill="#00ff00"/>
<rect x="595" y="430.5" width="2" height="2.0" fill="#00ff00"/>
<rect x="625" y="435.5" width="2" height="2.0" fill="#00ff00"/>
<rect x="595" y="440" width="2" height="2" fill="#00ff00"/>
<g shape-rendering="auto">
<text x="604" y="368" fill="#00ff00" stroke="#00ff00" font-size="9" text-anchor="start" font-family='"Liberation Sans", "Noto Sans CJK SC", sans-serif' textLength="13.2" lengthAdjust="spacingAndGlyphs">C–C</text>
</g>
</g>
<g id="notes" shape-rendering="auto">
<text x="568" y="572" fill="#00ffff" stroke="#00ffff" font-size="7" text-anchor="start" font-family='"Liberation Sans", "Noto Sans CJK SC", sans-serif' letter-spacing="1.9">技 术 要 求</text>
<text x="548" y="583.3" fill="#00ffff" stroke="#00ffff" font-size="4.6" text-anchor="start" font-family='"Liberation Sans", "Noto Sans CJK SC", sans-serif' textLength="102" lengthAdjust="spacingAndGlyphs">1.装配前与底板的结合面及基准不大于0.05mm</text>
<text x="548" y="590.5" fill="#00ffff" stroke="#00ffff" font-size="4.6" text-anchor="start" font-family='"Liberation Sans", "Noto Sans CJK SC", sans-serif' textLength="83" lengthAdjust="spacingAndGlyphs">2.对刀块须找准确后，用销钉定位。</text>
<rect x="550" y="593" width="139" height="5" fill="#00ffff"/>
<rect x="648" y="593" width="0.6000000000000227" height="5" fill="#000"/>
<text x="548" y="597.6" fill="#00ffff" stroke="#00ffff" font-size="4.6" text-anchor="start" font-family='"Liberation Sans", "Noto Sans CJK SC", sans-serif'>3.</text>
<rect x="550" y="600.3" width="18.5" height="4.400000000000091" fill="#00ffff"/>
<rect x="581" y="600.3" width="35.5" height="4.400000000000091" fill="#00ffff"/>
<text x="548" y="604.5" fill="#00ffff" stroke="#00ffff" font-size="4.6" text-anchor="start" font-family='"Liberation Sans", "Noto Sans CJK SC", sans-serif'>4.</text>
<text x="569.5" y="604" fill="#00ffff" stroke="#00ffff" font-size="3.5" text-anchor="start" font-family='"Liberation Sans", "Noto Sans CJK SC", sans-serif'>Ra3.2</text>
<text x="548" y="612.3" fill="#00ffff" stroke="#00ffff" font-size="4.6" text-anchor="start" font-family='"Liberation Sans", "Noto Sans CJK SC", sans-serif' textLength="127" lengthAdjust="spacingAndGlyphs">5.装配前应对零部件的主要尺寸及相关精度进行检查。</text>
<text x="548" y="619.2" fill="#00ffff" stroke="#00ffff" font-size="4.6" text-anchor="start" font-family='"Liberation Sans", "Noto Sans CJK SC", sans-serif' textLength="99" lengthAdjust="spacingAndGlyphs">6.装配过程中不允许磕、碰、划伤和锈蚀。</text>
</g>
<g id="title">
<line x1="806.5" y1="533.5" x2="949.5" y2="533.5" stroke="#ff00ff" stroke-width="1"/>
<line x1="806.5" y1="539.5" x2="949.5" y2="539.5" stroke="#ff00ff" stroke-width="1"/>
<line x1="806.5" y1="544.5" x2="949.5" y2="544.5" stroke="#ff00ff" stroke-width="1"/>
<line x1="806.5" y1="550.5" x2="949.5" y2="550.5" stroke="#ff00ff" stroke-width="1"/>
<line x1="806.5" y1="555.5" x2="949.5" y2="555.5" stroke="#ff00ff" stroke-width="1"/>
<line x1="806.5" y1="561.5" x2="949.5" y2="561.5" stroke="#ff00ff" stroke-width="1"/>
<line x1="806.5" y1="566.5" x2="949.5" y2="566.5" stroke="#ff00ff" stroke-width="1"/>
<line x1="806.5" y1="572.5" x2="949.5" y2="572.5" stroke="#ff00ff" stroke-width="1"/>
<line x1="806.5" y1="577.5" x2="949.5" y2="577.5" stroke="#ff00ff" stroke-width="1"/>
<line x1="806.5" y1="583.5" x2="949.5" y2="583.5" stroke="#ff00ff" stroke-width="1"/>
<line x1="806.5" y1="589.5" x2="949.5" y2="589.5" stroke="#ff00ff" stroke-width="1"/>
<line x1="806.5" y1="594.5" x2="949.5" y2="594.5" stroke="#ff00ff" stroke-width="1"/>
<line x1="806.5" y1="600.5" x2="949.5" y2="600.5" stroke="#ff00ff" stroke-width="1"/>
<line x1="806.5" y1="605.5" x2="949.5" y2="605.5" stroke="#ff00ff" stroke-width="1"/>
<line x1="806.5" y1="611.5" x2="949.5" y2="611.5" stroke="#ff00ff" stroke-width="1"/>
<line x1="806.5" y1="616.5" x2="949.5" y2="616.5" stroke="#ff00ff" stroke-width="1"/>
<line x1="806.5" y1="622.5" x2="949.5" y2="622.5" stroke="#ff00ff" stroke-width="1"/>
<line x1="814.5" y1="533.5" x2="814.5" y2="633.5" stroke="#ff00ff" stroke-width="1"/>
<line x1="845.5" y1="533.5" x2="845.5" y2="633.5" stroke="#ff00ff" stroke-width="1"/>
<line x1="881.5" y1="533.5" x2="881.5" y2="633.5" stroke="#ff00ff" stroke-width="1"/>
<line x1="889.5" y1="533.5" x2="889.5" y2="633.5" stroke="#ff00ff" stroke-width="1"/>
<line x1="913.5" y1="533.5" x2="913.5" y2="633.5" stroke="#ff00ff" stroke-width="1"/>
<line x1="806.5" y1="533.5" x2="806.5" y2="677.5" stroke="#ffffff" stroke-width="1"/>
<line x1="806.5" y1="633.5" x2="949.5" y2="633.5" stroke="#ffffff" stroke-width="1"/>
<g shape-rendering="auto">
<text x="810.5" y="538.4" fill="#ff00ff" stroke="#ff00ff" font-size="5.2" text-anchor="middle" font-family='"Liberation Sans", "Noto Sans CJK SC", sans-serif'>16</text>
<text x="885.5" y="538.4" fill="#ff00ff" stroke="#ff00ff" font-size="4.8" text-anchor="middle" font-family='"Liberation Sans", "Noto Sans CJK SC", sans-serif'>2</text>
<text x="901" y="538.4" fill="#ff00ff" stroke="#ff00ff" font-size="4.8" text-anchor="middle" font-family='"Liberation Sans", "Noto Sans CJK SC", sans-serif'>HT200</text>
<text x="810.5" y="544.4" fill="#ff00ff" stroke="#ff00ff" font-size="5.2" text-anchor="middle" font-family='"Liberation Sans", "Noto Sans CJK SC", sans-serif'>15</text>
<text x="817" y="544.1999999999999" fill="#ff00ff" stroke="#ff00ff" font-size="4.6" text-anchor="start" font-family='"Liberation Sans", "Noto Sans CJK SC", sans-serif' textLength="26" lengthAdjust="spacingAndGlyphs">GB/T119-86</text>
<text x="848" y="544.1" fill="#ff00ff" stroke="#ff00ff" font-size="4.8" text-anchor="start" font-family='"Liberation Sans", "Noto Sans CJK SC", sans-serif' textLength="30" lengthAdjust="spacingAndGlyphs">定 位 销</text>
<text x="885.5" y="544.4" fill="#ff00ff" stroke="#ff00ff" font-size="4.8" text-anchor="middle" font-family='"Liberation Sans", "Noto Sans CJK SC", sans-serif'>2</text>
<text x="901" y="544.4" fill="#ff00ff" stroke="#ff00ff" font-size="4.8" text-anchor="middle" font-family='"Liberation Sans", "Noto Sans CJK SC", sans-serif'>45</text>
<text x="810.5" y="549.4" fill="#ff00ff" stroke="#ff00ff" font-size="5.2" text-anchor="middle" font-family='"Liberation Sans", "Noto Sans CJK SC", sans-serif'>14</text>
<text x="817" y="549.1999999999999" fill="#ff00ff" stroke="#ff00ff" font-size="4.6" text-anchor="start" font-family='"Liberation Sans", "Noto Sans CJK SC", sans-serif' textLength="26" lengthAdjust="spacingAndGlyphs">GB/T70.1-85</text>
<text x="848" y="549.1" fill="#ff00ff" stroke="#ff00ff" font-size="4.8" text-anchor="start" font-family='"Liberation Sans", "Noto Sans CJK SC", sans-serif' textLength="32" lengthAdjust="spacingAndGlyphs">内六角螺钉M8</text>
<text x="885.5" y="549.4" fill="#ff00ff" stroke="#ff00ff" font-size="4.8" text-anchor="middle" font-family='"Liberation Sans", "Noto Sans CJK SC", sans-serif'>2</text>
<text x="901" y="549.4" fill="#ff00ff" stroke="#ff00ff" font-size="4.8" text-anchor="middle" font-family='"Liberation Sans", "Noto Sans CJK SC", sans-serif'>45</text>
<text x="810.5" y="555.4" fill="#ff00ff" stroke="#ff00ff" font-size="5.2" text-anchor="middle" font-family='"Liberation Sans", "Noto Sans CJK SC", sans-serif'>13</text>
<text x="817" y="555.1999999999999" fill="#ff00ff" stroke="#ff00ff" font-size="4.6" text-anchor="start" font-family='"Liberation Sans", "Noto Sans CJK SC", sans-serif' textLength="26" lengthAdjust="spacingAndGlyphs">JB/T8043-99</text>
<text x="880" y="555.1" fill="#ff00ff" stroke="#ff00ff" font-size="4.8" text-anchor="end" font-family='"Liberation Sans", "Noto Sans CJK SC", sans-serif' textLength="14" lengthAdjust="spacingAndGlyphs">对刀块</text>
<text x="885.5" y="555.4" fill="#ff00ff" stroke="#ff00ff" font-size="4.8" text-anchor="middle" font-family='"Liberation Sans", "Noto Sans CJK SC", sans-serif'>1</text>
<text x="901" y="555.4" fill="#ff00ff" stroke="#ff00ff" font-size="4.8" text-anchor="middle" font-family='"Liberation Sans", "Noto Sans CJK SC", sans-serif'>T8</text>
<text x="810.5" y="560.4" fill="#ff00ff" stroke="#ff00ff" font-size="5.2" text-anchor="middle" font-family='"Liberation Sans", "Noto Sans CJK SC", sans-serif'>12</text>
<text x="817" y="560.1999999999999" fill="#ff00ff" stroke="#ff00ff" font-size="4.6" text-anchor="start" font-family='"Liberation Sans", "Noto Sans CJK SC", sans-serif' textLength="26" lengthAdjust="spacingAndGlyphs">JB/T8045-99</text>
<text x="880" y="560.1" fill="#ff00ff" stroke="#ff00ff" font-size="4.8" text-anchor="end" font-family='"Liberation Sans", "Noto Sans CJK SC", sans-serif' textLength="14" lengthAdjust="spacingAndGlyphs">支承钉</text>
<text x="885.5" y="560.4" fill="#ff00ff" stroke="#ff00ff" font-size="4.8" text-anchor="middle" font-family='"Liberation Sans", "Noto Sans CJK SC", sans-serif'>1</text>
<text x="901" y="560.4" fill="#ff00ff" stroke="#ff00ff" font-size="4.8" text-anchor="middle" font-family='"Liberation Sans", "Noto Sans CJK SC", sans-serif'>T8</text>
<text x="810.5" y="566.4" fill="#ff00ff" stroke="#ff00ff" font-size="5.2" text-anchor="middle" font-family='"Liberation Sans", "Noto Sans CJK SC", sans-serif'>11</text>
<text x="880" y="566.1" fill="#ff00ff" stroke="#ff00ff" font-size="4.8" text-anchor="end" font-family='"Liberation Sans", "Noto Sans CJK SC", sans-serif' textLength="10" lengthAdjust="spacingAndGlyphs">压板</text>
<text x="885.5" y="566.4" fill="#ff00ff" stroke="#ff00ff" font-size="4.8" text-anchor="middle" font-family='"Liberation Sans", "Noto Sans CJK SC", sans-serif'>1</text>
<text x="901" y="566.4" fill="#ff00ff" stroke="#ff00ff" font-size="4.8" text-anchor="middle" font-family='"Liberation Sans", "Noto Sans CJK SC", sans-serif'>HT20</text>
<text x="810.5" y="571.4" fill="#ff00ff" stroke="#ff00ff" font-size="5.2" text-anchor="middle" font-family='"Liberation Sans", "Noto Sans CJK SC", sans-serif'>10</text>
<text x="817" y="571.1999999999999" fill="#ff00ff" stroke="#ff00ff" font-size="4.6" text-anchor="start" font-family='"Liberation Sans", "Noto Sans CJK SC", sans-serif' textLength="26" lengthAdjust="spacingAndGlyphs">LJWA1-5-</text>
<text x="880" y="571.1" fill="#ff00ff" stroke="#ff00ff" font-size="4.8" text-anchor="end" font-family='"Liberation Sans", "Noto Sans CJK SC", sans-serif' textLength="10" lengthAdjust="spacingAndGlyphs">螺母</text>
<text x="885.5" y="571.4" fill="#ff00ff" stroke="#ff00ff" font-size="4.8" text-anchor="middle" font-family='"Liberation Sans", "Noto Sans CJK SC", sans-serif'>1</text>
<text x="901" y="571.4" fill="#ff00ff" stroke="#ff00ff" font-size="4.8" text-anchor="middle" font-family='"Liberation Sans", "Noto Sans CJK SC", sans-serif'>Q235-A</text>
<text x="810.5" y="577.4" fill="#ff00ff" stroke="#ff00ff" font-size="5.2" text-anchor="middle" font-family='"Liberation Sans", "Noto Sans CJK SC", sans-serif'>9</text>
<text x="817" y="577.1999999999999" fill="#ff00ff" stroke="#ff00ff" font-size="4.6" text-anchor="start" font-family='"Liberation Sans", "Noto Sans CJK SC", sans-serif' textLength="26" lengthAdjust="spacingAndGlyphs">JB/T8004-99</text>
<text x="848" y="577.1" fill="#ff00ff" stroke="#ff00ff" font-size="4.8" text-anchor="start" font-family='"Liberation Sans", "Noto Sans CJK SC", sans-serif' textLength="32" lengthAdjust="spacingAndGlyphs">带肩六角螺母M</text>
<text x="885.5" y="577.4" fill="#ff00ff" stroke="#ff00ff" font-size="4.8" text-anchor="middle" font-family='"Liberation Sans", "Noto Sans CJK SC", sans-serif'>2</text>
<text x="901" y="577.4" fill="#ff00ff" stroke="#ff00ff" font-size="4.8" text-anchor="middle" font-family='"Liberation Sans", "Noto Sans CJK SC", sans-serif'>45</text>
<text x="810.5" y="582.4" fill="#ff00ff" stroke="#ff00ff" font-size="5.2" text-anchor="middle" font-family='"Liberation Sans", "Noto Sans CJK SC", sans-serif'>8</text>
<text x="817" y="582.1999999999999" fill="#ff00ff" stroke="#ff00ff" font-size="4.6" text-anchor="start" font-family='"Liberation Sans", "Noto Sans CJK SC", sans-serif' textLength="26" lengthAdjust="spacingAndGlyphs">GB/T97.1-85</text>
<text x="848" y="582.1" fill="#ff00ff" stroke="#ff00ff" font-size="4.8" text-anchor="start" font-family='"Liberation Sans", "Noto Sans CJK SC", sans-serif' textLength="26" lengthAdjust="spacingAndGlyphs">10×平垫圈</text>
<text x="885.5" y="582.4" fill="#ff00ff" stroke="#ff00ff" font-size="4.8" text-anchor="middle" font-family='"Liberation Sans", "Noto Sans CJK SC", sans-serif'>2</text>
<text x="901" y="582.4" fill="#ff00ff" stroke="#ff00ff" font-size="4.8" text-anchor="middle" font-family='"Liberation Sans", "Noto Sans CJK SC", sans-serif'>45</text>
<text x="810.5" y="588.4" fill="#ff00ff" stroke="#ff00ff" font-size="5.2" text-anchor="middle" font-family='"Liberation Sans", "Noto Sans CJK SC", sans-serif'>7</text>
<text x="817" y="588.1999999999999" fill="#ff00ff" stroke="#ff00ff" font-size="4.6" text-anchor="start" font-family='"Liberation Sans", "Noto Sans CJK SC", sans-serif' textLength="26" lengthAdjust="spacingAndGlyphs">GB/T2089-8</text>
<text x="863.5" y="588.1" fill="#ff00ff" stroke="#ff00ff" font-size="4.8" text-anchor="middle" font-family='"Liberation Sans", "Noto Sans CJK SC", sans-serif' textLength="18" lengthAdjust="spacingAndGlyphs">弹 簧</text>
<text x="885.5" y="588.4" fill="#ff00ff" stroke="#ff00ff" font-size="4.8" text-anchor="middle" font-family='"Liberation Sans", "Noto Sans CJK SC", sans-serif'>2</text>
<text x="901" y="588.4" fill="#ff00ff" stroke="#ff00ff" font-size="4.8" text-anchor="middle" font-family='"Liberation Sans", "Noto Sans CJK SC", sans-serif'>65</text>
<text x="810.5" y="594.4" fill="#ff00ff" stroke="#ff00ff" font-size="5.2" text-anchor="middle" font-family='"Liberation Sans", "Noto Sans CJK SC", sans-serif'>6</text>
<text x="830" y="594.1999999999999" fill="#ff00ff" stroke="#ff00ff" font-size="4.6" text-anchor="middle" font-family='"Liberation Sans", "Noto Sans CJK SC", sans-serif' font-weight="bold" textLength="18" lengthAdjust="spacingAndGlyphs">LJ-06</text>
<text x="863.5" y="594.1" fill="#ff00ff" stroke="#ff00ff" font-size="4.8" text-anchor="middle" font-family='"Liberation Sans", "Noto Sans CJK SC", sans-serif' textLength="13" lengthAdjust="spacingAndGlyphs">支 承</text>
<text x="885.5" y="594.4" fill="#ff00ff" stroke="#ff00ff" font-size="4.8" text-anchor="middle" font-family='"Liberation Sans", "Noto Sans CJK SC", sans-serif'>1</text>
<text x="901" y="594.4" fill="#ff00ff" stroke="#ff00ff" font-size="4.8" text-anchor="middle" font-family='"Liberation Sans", "Noto Sans CJK SC", sans-serif'>45</text>
<text x="810.5" y="599.4" fill="#ff00ff" stroke="#ff00ff" font-size="5.2" text-anchor="middle" font-family='"Liberation Sans", "Noto Sans CJK SC", sans-serif'>5</text>
<text x="830" y="599.1999999999999" fill="#ff00ff" stroke="#ff00ff" font-size="4.6" text-anchor="middle" font-family='"Liberation Sans", "Noto Sans CJK SC", sans-serif' font-weight="bold" textLength="18" lengthAdjust="spacingAndGlyphs">LJ-05</text>
<text x="863.5" y="599.1" fill="#ff00ff" stroke="#ff00ff" font-size="4.8" text-anchor="middle" font-family='"Liberation Sans", "Noto Sans CJK SC", sans-serif' textLength="13" lengthAdjust="spacingAndGlyphs">定位销</text>
<text x="885.5" y="599.4" fill="#ff00ff" stroke="#ff00ff" font-size="4.8" text-anchor="middle" font-family='"Liberation Sans", "Noto Sans CJK SC", sans-serif'>1</text>
<text x="901" y="599.4" fill="#ff00ff" stroke="#ff00ff" font-size="4.8" text-anchor="middle" font-family='"Liberation Sans", "Noto Sans CJK SC", sans-serif'>T8</text>
<text x="810.5" y="605.4" fill="#ff00ff" stroke="#ff00ff" font-size="5.2" text-anchor="middle" font-family='"Liberation Sans", "Noto Sans CJK SC", sans-serif'>4</text>
<text x="830" y="605.1999999999999" fill="#ff00ff" stroke="#ff00ff" font-size="4.6" text-anchor="middle" font-family='"Liberation Sans", "Noto Sans CJK SC", sans-serif' font-weight="bold" textLength="18" lengthAdjust="spacingAndGlyphs">LJ-04</text>
<text x="863.5" y="605.1" fill="#ff00ff" stroke="#ff00ff" font-size="4.8" text-anchor="middle" font-family='"Liberation Sans", "Noto Sans CJK SC", sans-serif' textLength="13" lengthAdjust="spacingAndGlyphs">夹具体</text>
<text x="885.5" y="605.4" fill="#ff00ff" stroke="#ff00ff" font-size="4.8" text-anchor="middle" font-family='"Liberation Sans", "Noto Sans CJK SC", sans-serif'>1</text>
<text x="901" y="605.4" fill="#ff00ff" stroke="#ff00ff" font-size="4.8" text-anchor="middle" font-family='"Liberation Sans", "Noto Sans CJK SC", sans-serif'>45</text>
<text x="810.5" y="610.4" fill="#ff00ff" stroke="#ff00ff" font-size="5.2" text-anchor="middle" font-family='"Liberation Sans", "Noto Sans CJK SC", sans-serif'>3</text>
<text x="830" y="610.1999999999999" fill="#ff00ff" stroke="#ff00ff" font-size="4.6" text-anchor="middle" font-family='"Liberation Sans", "Noto Sans CJK SC", sans-serif' font-weight="bold" textLength="18" lengthAdjust="spacingAndGlyphs">LJ-03</text>
<text x="863.5" y="610.1" fill="#ff00ff" stroke="#ff00ff" font-size="4.8" text-anchor="middle" font-family='"Liberation Sans", "Noto Sans CJK SC", sans-serif' textLength="10" lengthAdjust="spacingAndGlyphs">定位键</text>
<text x="885.5" y="610.4" fill="#ff00ff" stroke="#ff00ff" font-size="4.8" text-anchor="middle" font-family='"Liberation Sans", "Noto Sans CJK SC", sans-serif'>1</text>
<text x="901" y="610.4" fill="#ff00ff" stroke="#ff00ff" font-size="4.8" text-anchor="middle" font-family='"Liberation Sans", "Noto Sans CJK SC", sans-serif'>HT200</text>
<text x="810.5" y="616.4" fill="#ff00ff" stroke="#ff00ff" font-size="5.2" text-anchor="middle" font-family='"Liberation Sans", "Noto Sans CJK SC", sans-serif'>2</text>
<text x="830" y="616.1999999999999" fill="#ff00ff" stroke="#ff00ff" font-size="4.6" text-anchor="middle" font-family='"Liberation Sans", "Noto Sans CJK SC", sans-serif' font-weight="bold" textLength="18" lengthAdjust="spacingAndGlyphs">LJ-02</text>
<text x="863.5" y="616.1" fill="#ff00ff" stroke="#ff00ff" font-size="4.8" text-anchor="middle" font-family='"Liberation Sans", "Noto Sans CJK SC", sans-serif' textLength="16" lengthAdjust="spacingAndGlyphs">底板零件</text>
<text x="885.5" y="616.4" fill="#ff00ff" stroke="#ff00ff" font-size="4.8" text-anchor="middle" font-family='"Liberation Sans", "Noto Sans CJK SC", sans-serif'>1</text>
<text x="901" y="616.4" fill="#ff00ff" stroke="#ff00ff" font-size="4.8" text-anchor="middle" font-family='"Liberation Sans", "Noto Sans CJK SC", sans-serif'>45</text>
<text x="810.5" y="621.4" fill="#ff00ff" stroke="#ff00ff" font-size="5.2" text-anchor="middle" font-family='"Liberation Sans", "Noto Sans CJK SC", sans-serif'>1</text>
<text x="830" y="621.1999999999999" fill="#ff00ff" stroke="#ff00ff" font-size="4.6" text-anchor="middle" font-family='"Liberation Sans", "Noto Sans CJK SC", sans-serif' font-weight="bold" textLength="18" lengthAdjust="spacingAndGlyphs">LJ-01</text>
<text x="863.5" y="621.1" fill="#ff00ff" stroke="#ff00ff" font-size="4.8" text-anchor="middle" font-family='"Liberation Sans", "Noto Sans CJK SC", sans-serif' textLength="9" lengthAdjust="spacingAndGlyphs">支座</text>
<text x="885.5" y="621.4" fill="#ff00ff" stroke="#ff00ff" font-size="4.8" text-anchor="middle" font-family='"Liberation Sans", "Noto Sans CJK SC", sans-serif'>1</text>
<text x="901" y="621.4" fill="#ff00ff" stroke="#ff00ff" font-size="4.8" text-anchor="middle" font-family='"Liberation Sans", "Noto Sans CJK SC", sans-serif'>45</text>
<text x="819.5" y="631.5" fill="#ff00ff" stroke="#ff00ff" font-size="6" text-anchor="start" font-family='"Liberation Sans", "Noto Sans CJK SC", sans-serif'>代</text>
<text x="835.5" y="631.5" fill="#ff00ff" stroke="#ff00ff" font-size="6" text-anchor="start" font-family='"Liberation Sans", "Noto Sans CJK SC", sans-serif'>号</text>
<text x="848" y="631.5" fill="#ff00ff" stroke="#ff00ff" font-size="6" text-anchor="start" font-family='"Liberation Sans", "Noto Sans CJK SC", sans-serif' letter-spacing="3.3">零件名称</text>
<text x="891" y="631.5" fill="#ff00ff" stroke="#ff00ff" font-size="6" text-anchor="start" font-family='"Liberation Sans", "Noto Sans CJK SC", sans-serif'>材</text>
<text x="906.5" y="631.5" fill="#ff00ff" stroke="#ff00ff" font-size="6" text-anchor="start" font-family='"Liberation Sans", "Noto Sans CJK SC", sans-serif'>料</text>
<text x="921.5" y="631.5" fill="#ff00ff" stroke="#ff00ff" font-size="6" text-anchor="start" font-family='"Liberation Sans", "Noto Sans CJK SC", sans-serif'>备</text>
<text x="938" y="631.5" fill="#ff00ff" stroke="#ff00ff" font-size="6" text-anchor="start" font-family='"Liberation Sans", "Noto Sans CJK SC", sans-serif'>注</text>
</g>
<rect x="807.5" y="624" width="5.5" height="3.5" fill="#ff00ff"/>
<rect x="807.5" y="629" width="5.5" height="4" fill="#ff00ff"/>
<rect x="883" y="624" width="5" height="3.5" fill="#ff00ff"/>
<rect x="883" y="629" width="5" height="4" fill="#ff00ff"/>
<rect x="852" y="535" width="17" height="3" fill="#ff00ff"/>
<rect x="847" y="552" width="19" height="4" fill="#ff00ff"/>
<rect x="847" y="557.5" width="19" height="4.0" fill="#ff00ff"/>
<rect x="849" y="563.5" width="7" height="3.0" fill="#ff00ff"/>
<rect x="847" y="568" width="22" height="4" fill="#ff00ff"/>
<rect x="891" y="568" width="23" height="4.5" fill="#ff00ff"/>
<line x1="806.5" y1="638.5" x2="869.5" y2="638.5" stroke="#00ff00" stroke-width="1"/>
<line x1="806.5" y1="644.5" x2="869.5" y2="644.5" stroke="#00ff00" stroke-width="1"/>
<line x1="806.5" y1="650.5" x2="869.5" y2="650.5" stroke="#00ff00" stroke-width="1"/>
<line x1="806.5" y1="655.5" x2="869.5" y2="655.5" stroke="#00ff00" stroke-width="1"/>
<line x1="806.5" y1="661.5" x2="869.5" y2="661.5" stroke="#00ff00" stroke-width="1"/>
<line x1="806.5" y1="666.5" x2="869.5" y2="666.5" stroke="#00ff00" stroke-width="1"/>
<line x1="806.5" y1="671.5" x2="869.5" y2="671.5" stroke="#00ff00" stroke-width="1"/>
<line x1="814.5" y1="633.5" x2="814.5" y2="655.5" stroke="#00ff00" stroke-width="1"/>
<line x1="822.5" y1="633.5" x2="822.5" y2="655.5" stroke="#00ff00" stroke-width="1"/>
<line x1="832.5" y1="633.5" x2="832.5" y2="655.5" stroke="#00ff00" stroke-width="1"/>
<line x1="847.5" y1="633.5" x2="847.5" y2="655.5" stroke="#00ff00" stroke-width="1"/>
<line x1="857.5" y1="633.5" x2="857.5" y2="655.5" stroke="#00ff00" stroke-width="1"/>
<line x1="814.5" y1="655.5" x2="814.5" y2="677.5" stroke="#00ff00" stroke-width="1"/>
<line x1="825.5" y1="655.5" x2="825.5" y2="677.5" stroke="#00ff00" stroke-width="1"/>
<line x1="838.5" y1="655.5" x2="838.5" y2="677.5" stroke="#00ff00" stroke-width="1"/>
<line x1="847.5" y1="655.5" x2="847.5" y2="677.5" stroke="#00ff00" stroke-width="1"/>
<line x1="857.5" y1="655.5" x2="857.5" y2="677.5" stroke="#00ff00" stroke-width="1"/>
<line x1="869.5" y1="633.5" x2="869.5" y2="677.5" stroke="#00ff00" stroke-width="1"/>
<rect x="807" y="651" width="14" height="4.5" fill="#00ff00"/>
<rect x="824" y="651" width="7" height="4.5" fill="#00ff00"/>
<rect x="833" y="651" width="22" height="4.5" fill="#00ff00"/>
<rect x="857.5" y="651" width="12.0" height="4.5" fill="#00ff00"/>
<rect x="807" y="657" width="7" height="3" fill="#00ff00"/>
<rect x="838.5" y="655.5" width="9.0" height="1.5" fill="#00ff00"/>
<rect x="840" y="662" width="6" height="3" fill="#00ff00"/>
<rect x="807" y="668" width="7" height="3" fill="#00ff00"/>
<rect x="840" y="668" width="6" height="3" fill="#00ff00"/>
<rect x="807" y="672.5" width="7" height="4.5" fill="#00ff00"/>
<rect x="840" y="672.5" width="6" height="4.5" fill="#00ff00"/>
<line x1="909.5" y1="633.5" x2="909.5" y2="677.5" stroke="#00ff00" stroke-width="1"/>
<line x1="869.5" y1="655.5" x2="909.5" y2="655.5" stroke="#00ff00" stroke-width="1"/>
<line x1="869.5" y1="663.5" x2="909.5" y2="663.5" stroke="#00ff00" stroke-width="1"/>
<line x1="869.5" y1="671.5" x2="909.5" y2="671.5" stroke="#00ff00" stroke-width="1"/>
<line x1="891.5" y1="655.5" x2="891.5" y2="671.5" stroke="#00ff00" stroke-width="1"/>
<line x1="899.5" y1="655.5" x2="899.5" y2="671.5" stroke="#00ff00" stroke-width="1"/>
<line x1="873.5" y1="663.5" x2="873.5" y2="671.5" stroke="#00ff00" stroke-width="1"/>
<line x1="877.5" y1="663.5" x2="877.5" y2="671.5" stroke="#00ff00" stroke-width="1"/>
<line x1="881.5" y1="663.5" x2="881.5" y2="671.5" stroke="#00ff00" stroke-width="1"/>
<line x1="885.5" y1="663.5" x2="885.5" y2="671.5" stroke="#00ff00" stroke-width="1"/>
<rect x="870" y="657" width="20" height="4.5" fill="#00ff00"/>
<rect x="892.5" y="657" width="6.0" height="4.5" fill="#00ff00"/>
<rect x="901" y="657" width="7" height="4.5" fill="#00ff00"/>
<rect x="901" y="665" width="7" height="4" fill="#00ff00"/>
<rect x="870" y="673" width="38" height="3.5" fill="#00ff00"/>
<line x1="909.5" y1="647.5" x2="949.5" y2="647.5" stroke="#00ff00" stroke-width="1"/>
<line x1="909.5" y1="663.5" x2="949.5" y2="663.5" stroke="#00ff00" stroke-width="1"/>
<rect x="911" y="657" width="34" height="5" fill="#00ff00"/>
<g shape-rendering="auto">
<text x="877" y="649.5" fill="#00ff00" stroke="#00ff00" font-size="6.5" text-anchor="start" font-family='"Liberation Sans", "Noto Sans CJK SC", sans-serif' letter-spacing="0.3">装配图</text>
<text x="911" y="655" fill="#00ff00" stroke="#00ff00" font-size="6.5" text-anchor="start" font-family='"Liberation Sans", "Noto Sans CJK SC", sans-serif' letter-spacing="0.1">立架铣夹具</text>
</g>
</g>
</svg>
</body></html>
